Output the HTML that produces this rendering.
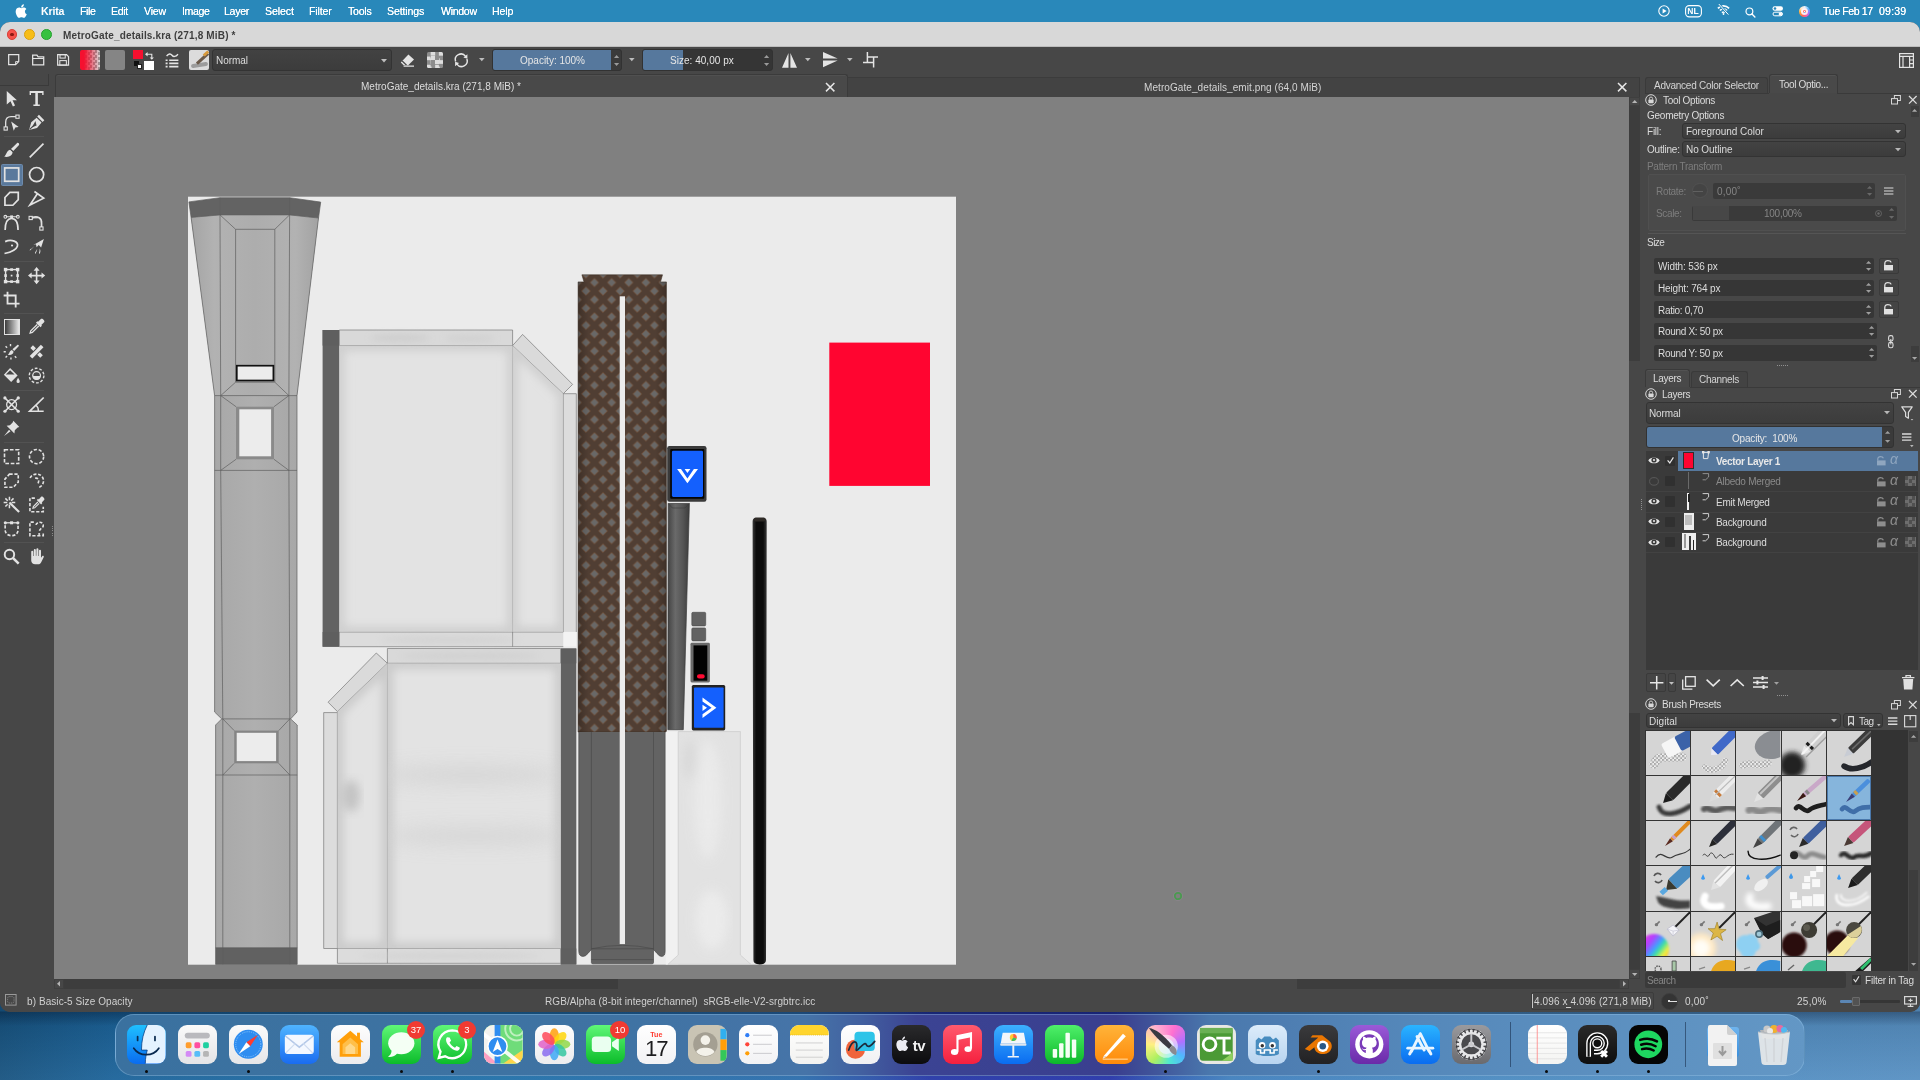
<!DOCTYPE html>
<html><head><meta charset="utf-8"><title>Krita</title>
<style>
*{box-sizing:border-box;margin:0;padding:0}
html,body{width:1920px;height:1080px;overflow:hidden;background:#1f6ea6;font-family:"Liberation Sans",sans-serif;}
.a{position:absolute}
.t{position:absolute;will-change:transform;white-space:pre;line-height:1;color:#dcdcdc;font-size:10px}
svg{position:absolute;overflow:visible}
#wall{left:0;top:0;width:1920px;height:1080px;background:
 linear-gradient(180deg,rgba(0,0,0,0) 1011px,rgba(0,10,30,.30) 1012px,rgba(0,10,30,0) 1026px),
 linear-gradient(180deg,rgba(0,0,0,.10) 1012px,rgba(255,255,255,.06) 1080px),
 linear-gradient(90deg,#16527f 0,#1a6299 115px,#1f6fa8 500px,#2a6cab 800px,#2a52a8 870px,#2436a6 930px,#2433a8 1110px,#3060b4 1170px,#3f7fbd 1230px,#4a8ac0 1500px,#568fc2 1920px);}
#menubar{left:0;top:0;width:1920px;height:22px;background:#2988ba}
#win{left:0;top:22px;width:1920px;height:990px;background:#474747;border-radius:10px;overflow:hidden}
</style></head><body>
<div id="wall" class="a"></div>
<div class="a" style="left:0;top:22px;width:1920px;height:14px;background:#2988ba"></div><div id="menubar" class="a"><svg style="left:15px;top:3.5px;" width="12" height="14.5" viewBox="0.8 3 14.6 18.6"><path fill="#fff" d="M13.1 12.6c-.02-2.2 1.8-3.27 1.88-3.32-1.03-1.5-2.62-1.7-3.18-1.73-1.35-.14-2.64.8-3.33.8-.69 0-1.75-.78-2.88-.76-1.48.02-2.85.86-3.61 2.19-1.54 2.67-.39 6.62 1.1 8.79.74 1.06 1.61 2.25 2.76 2.21 1.11-.04 1.53-.71 2.87-.71 1.33 0 1.71.71 2.88.69 1.19-.02 1.94-1.08 2.67-2.15.84-1.23 1.19-2.42 1.21-2.48-.03-.01-2.32-.89-2.37-3.53zM10.9 6.1c.61-.74 1.02-1.77.91-2.8-.88.04-1.94.59-2.57 1.32-.56.65-1.06 1.7-.93 2.71.98.08 1.98-.5 2.59-1.23z"/></svg><span class="t" style="left:40.50px;top:6px;font-size:10.6px;font-weight:bold;color:#fff;letter-spacing:-0.170px;">Krita</span><span class="t" style="left:79.50px;top:6px;font-size:10.6px;color:#fff;letter-spacing:-0.395px;text-shadow:0 0 .4px #fff;">File</span><span class="t" style="left:111.00px;top:6px;font-size:10.6px;color:#fff;letter-spacing:-0.316px;text-shadow:0 0 .4px #fff;">Edit</span><span class="t" style="left:144.00px;top:6px;font-size:10.6px;color:#fff;letter-spacing:-0.196px;text-shadow:0 0 .4px #fff;">View</span><span class="t" style="left:181.50px;top:6px;font-size:10.6px;color:#fff;letter-spacing:-0.392px;text-shadow:0 0 .4px #fff;">Image</span><span class="t" style="left:224.00px;top:6px;font-size:10.6px;color:#fff;letter-spacing:-0.303px;text-shadow:0 0 .4px #fff;">Layer</span><span class="t" style="left:264.50px;top:6px;font-size:10.6px;color:#fff;letter-spacing:-0.110px;text-shadow:0 0 .4px #fff;">Select</span><span class="t" style="left:309.00px;top:6px;font-size:10.6px;color:#fff;letter-spacing:-0.142px;text-shadow:0 0 .4px #fff;">Filter</span><span class="t" style="left:347.50px;top:6px;font-size:10.6px;color:#fff;letter-spacing:-0.249px;text-shadow:0 0 .4px #fff;">Tools</span><span class="t" style="left:387.00px;top:6px;font-size:10.6px;color:#fff;letter-spacing:-0.125px;text-shadow:0 0 .4px #fff;">Settings</span><span class="t" style="left:440.50px;top:6px;font-size:10.6px;color:#fff;letter-spacing:-0.316px;text-shadow:0 0 .4px #fff;">Window</span><span class="t" style="left:492.00px;top:6px;font-size:10.6px;color:#fff;letter-spacing:-0.125px;text-shadow:0 0 .4px #fff;">Help</span><span class="t" style="left:1822.80px;top:6px;font-size:10.6px;color:#fff;letter-spacing:-0.411px;text-shadow:0 0 .4px #fff;">Tue Feb 17</span><span class="t" style="left:1878.60px;top:6px;font-size:10.6px;color:#fff;letter-spacing:0.175px;text-shadow:0 0 .4px #fff;">09:39</span><svg style="left:1658.2px;top:5px;" width="12" height="12"><circle cx="6" cy="6" r="5.2" fill="none" stroke="#fff" stroke-width="1.1"/><path d="M4.6 3.6L8.6 6L4.6 8.4z" fill="#fff"/></svg><svg style="left:1684.5px;top:5px;" width="17" height="12.5"><rect x=".6" y=".6" width="15.8" height="11.3" rx="3.6" fill="none" stroke="#fff" stroke-width="1.1"/></svg><span class="t" style="left:1693.00px;top:7px;font-size:8.5px;font-weight:bold;color:#fff;transform:translateX(-50%);">NL</span><svg style="left:1717.4px;top:4.4px;" width="13" height="11"><g fill="none" stroke="#fff" stroke-linecap="butt"><path d="M.9 4.3C4.2 1.0 8.8 1.0 12.1 4.3" stroke-width="1.7"/><path d="M2.9 6.5C5.1 4.5 7.9 4.5 10.1 6.5" stroke-width="1.6"/><path d="M4.9 8.6C5.9 7.8 7.1 7.8 8.1 8.6" stroke-width="1.5"/></g><circle cx="6.5" cy="10" r=".9" fill="#fff"/><path d="M1.8 0L11.4 10.6" stroke="#2988ba" stroke-width="2.6"/><path d="M1.8 0L11.4 10.6" stroke="#fff" stroke-width="1"/></svg><svg style="left:1744.7px;top:6.5px;" width="11" height="11" viewBox="0 0 12 12"><circle cx="4.8" cy="4.8" r="3.7" fill="none" stroke="#fff" stroke-width="1.3"/><path d="M7.6 7.6L10.8 10.8" stroke="#fff" stroke-width="1.5" stroke-linecap="round"/></svg><svg style="left:1771.5px;top:6px;" width="11.5" height="11"><rect x=".5" y=".3" width="10.5" height="4.4" rx="2.2" fill="#fff"/><circle cx="3" cy="2.5" r="1.3" fill="#2988ba"/><rect x="1" y="6.2" width="9.5" height="3.6" rx="1.8" fill="none" stroke="#fff" stroke-width="1"/><circle cx="8.4" cy="8" r="1.7" fill="#fff"/></svg><div class="a" style="left:1799.1px;top:5.5px;width:11.4px;height:11.4px;border-radius:50%;background:conic-gradient(from 210deg,#ff6a4a,#ffb03a,#ffe6c8,#e8f2ff,#5ab8ff,#a070ff,#ff5aa8,#ff6a4a)"></div><div class="a" style="left:1801.1px;top:7.5px;width:7.4px;height:7.4px;border-radius:50%;background:radial-gradient(circle at 40% 40%,#fff 0,#ffe9f0 55%,#ffc8d8 100%)"></div><div class="a" style="left:1803px;top:9.6px;width:3.4px;height:3px;border-radius:50%;border:.8px solid #ff7a70;border-bottom-color:#6ab0ff"></div></div><div id="win" class="a"><div class="a" style="left:0px;top:0px;width:1920px;height:24.5px;background:#d8d8d8;border-bottom:1px solid #bdbdbd;"></div><div class="a" style="left:6.8px;top:7.3px;width:10.6px;height:10.6px;border-radius:50%;background:#f6524a;border:.5px solid #d8423a"></div><div class="a" style="left:24px;top:7.3px;width:10.6px;height:10.6px;border-radius:50%;background:#f7bd17;border:.5px solid #d9a213"></div><div class="a" style="left:41.3px;top:7.3px;width:10.6px;height:10.6px;border-radius:50%;background:#36c13f;border:.5px solid #2aa233"></div><div class="a" style="left:10.3px;top:10.8px;width:3.6px;height:3.6px;border-radius:50%;background:#8c1a12"></div><span class="t" style="left:63.30px;top:9px;font-size:10px;font-weight:bold;color:#3e3e3e;letter-spacing:0.170px;">MetroGate_details.kra (271,8 MiB) *</span><svg style="left:7.9px;top:32.2px;" width="11.4" height="11.4" viewBox="0 0 12 12"><path d="M.7.7H11.3V8L8 11.3H.7z" fill="none" stroke="#e4e4e4" stroke-width="1.3"/><path d="M11.3 8H8V11.3" fill="none" stroke="#e4e4e4" stroke-width="1"/></svg><svg style="left:32px;top:32.1px;" width="12.4" height="11.6" viewBox="0 0 13 12"><path d="M.7 11.3V1.2H5.2L6.4 3H12.3V11.3z" fill="none" stroke="#e4e4e4" stroke-width="1.3"/><path d="M.7 4.6H12.3" stroke="#e4e4e4" stroke-width="1.2"/></svg><svg style="left:56.9px;top:32.1px;" width="12.2" height="11.8" viewBox="0 0 13 12.5"><path d="M.7.7H10.2L12.3 2.8V11.8H.7z" fill="none" stroke="#e4e4e4" stroke-width="1.3"/><rect x="3.2" y=".7" width="5.6" height="3.6" fill="none" stroke="#e4e4e4" stroke-width="1.1"/><rect x="3" y="7" width="7" height="4.8" fill="none" stroke="#e4e4e4" stroke-width="1.1"/></svg><div class="a" style="left:80px;top:28px;width:20px;height:20px;border-radius:2px;background:linear-gradient(90deg,#f5102f 0,#f5102f 20%,rgba(245,16,47,0) 100%),repeating-conic-gradient(#d8d8d8 0 25%,#9a9a9a 0 50%) 0 0/5px 5px"></div><div class="a" style="left:105px;top:28px;width:19.5px;height:20px;border-radius:2px;background:#858585"></div><div class="a" style="left:143.6px;top:38.8px;width:10px;height:9.6px;background:#fff;"></div><div class="a" style="left:133px;top:28.4px;width:9.6px;height:9px;background:#f5102f;"></div><div class="a" style="left:133.6px;top:39.4px;width:5px;height:4.6px;background:#111;"></div><div class="a" style="left:136.6px;top:42.4px;width:5px;height:4.6px;background:#fff;border:.6px solid #222;"></div><svg style="left:144.5px;top:29px;" width="9" height="8.5"><path d="M1.5 3.2H6.8V7.6" fill="none" stroke="#e4e4e4" stroke-width="1.1"/><path d="M0 3.2L2.6 1V5.4z M6.8 8.8L4.7 6.4H8.9z" fill="#e4e4e4"/></svg><svg style="left:165px;top:30px;" width="14" height="16"><path d="M1.6 4.2C3.6 1.4 5.6 1.4 7 3.2S10.6 5 13 2.2" fill="none" stroke="#e4e4e4" stroke-width="1.4"/><g stroke="#e4e4e4" stroke-width="1.6"><path d="M4.2 8.2H13.4M4.2 11.4H13.4M4.2 14.6H13.4"/><path d="M.6 8.2H2.6M.6 11.4H2.6M.6 14.6H2.6"/></g></svg><div class="a" style="left:189px;top:28px;width:20px;height:20px;border-radius:2px;background:#dcdcdc;overflow:hidden"><div class="a" style="left:2px;top:13px;width:17px;height:4px;border-radius:2px;background:#9c9c9c;transform:rotate(-8deg)"></div><div class="a" style="left:6px;top:7px;width:15px;height:3px;background:#6b5a4a;transform:rotate(-42deg)"></div><div class="a" style="left:14px;top:2px;width:6px;height:3px;background:#d99a3a;transform:rotate(-42deg)"></div></div><div class="a" style="left:212px;top:27px;width:179.5px;height:22px;border-radius:3px;background:linear-gradient(#424242,#3c3c3c);border:1px solid #333"></div><span class="t" style="left:215.60px;top:34px;font-size:10px;letter-spacing:-0.038px;">Normal</span><svg style="left:380.5px;top:36.6px;" width="6" height="3.4"><path d="M0 0H6L3 3.4z" fill="#bdbdbd"/></svg><svg style="left:399.5px;top:31.5px;" width="15" height="13"><path d="M8.4.6L14 5.6L8.2 11.2H3.6L.8 8.4z" fill="#e4e4e4"/><path d="M2.2 7L6.6 11.2" stroke="#474747" stroke-width="1.2"/><path d="M3.6 12.2H14" stroke="#e4e4e4" stroke-width="1.2"/></svg><div class="a" style="left:426.6px;top:30px;width:16.4px;height:16.4px;border-radius:1.5px;background:repeating-conic-gradient(#dedede 0 25%,#8d8d8d 0 50%) 0 0/8.2px 8.2px"></div><div class="a" style="left:430.7px;top:34.1px;width:8.2px;height:8.2px;background:repeating-conic-gradient(#8d8d8d 0 25%,#dedede 0 50%) 0 0/8.2px 8.2px"></div><svg style="left:454px;top:31px;" width="14.5" height="14.5"><g fill="none" stroke="#e4e4e4" stroke-width="1.5"><path d="M1.6 8.6A5.7 5.7 0 0 1 11.6 3.4"/><path d="M12.9 5.9A5.7 5.7 0 0 1 2.9 11.1"/></g><path d="M9.4 4.4L13.4 1.2L13.4 5.8z M5.1 10.1L1.1 13.3L1.1 8.7z" fill="#e4e4e4"/></svg><svg style="left:479.2px;top:36.4px;" width="5.6" height="3.2"><path d="M0 0H5.6L2.8 3.2z" fill="#bdbdbd"/></svg><div class="a" style="left:492px;top:27px;width:130px;height:21.5px;border-radius:3px;background:#3a3a3a;border:1px solid #323232"></div><div class="a" style="left:493px;top:28px;width:118.4px;height:19.5px;background:#56789d;border-radius:2px 0 0 2px;"></div><span class="t" style="left:519.60px;top:34px;font-size:10px;color:#e6e6e6;letter-spacing:-0.003px;">Opacity: 100%</span><svg style="left:614.4px;top:32.6px;" width="5.2" height="3"><path d="M0 3H5.2L2.6 0z" fill="#9a9a9a"/></svg><svg style="left:614.4px;top:41px;" width="5.2" height="3"><path d="M0 0H5.2L2.6 3z" fill="#9a9a9a"/></svg><svg style="left:629.2px;top:36.4px;" width="5.6" height="3.2"><path d="M0 0H5.6L2.8 3.2z" fill="#bdbdbd"/></svg><div class="a" style="left:642px;top:27px;width:131px;height:21.5px;border-radius:3px;background:#353535;border:1px solid #323232"></div><div class="a" style="left:643px;top:28px;width:40px;height:19.5px;background:#56789d;border-radius:2px 0 0 2px;"></div><span class="t" style="left:670.00px;top:34px;font-size:10px;color:#e6e6e6;letter-spacing:0.030px;">Size: 40,00 px</span><svg style="left:764.4px;top:32.6px;" width="5.2" height="3"><path d="M0 3H5.2L2.6 0z" fill="#9a9a9a"/></svg><svg style="left:764.4px;top:41px;" width="5.2" height="3"><path d="M0 0H5.2L2.6 3z" fill="#9a9a9a"/></svg><svg style="left:781.6px;top:30.9px;" width="15" height="14.7"><path d="M0 14.7L6.5 0V14.7z M8.4 0V14.7H15z" fill="#e4e4e4"/></svg><svg style="left:805.4px;top:36.4px;" width="5.6" height="3.2"><path d="M0 0H5.6L2.8 3.2z" fill="#bdbdbd"/></svg><svg style="left:823.1px;top:30.25px;" width="14.7" height="15.35"><path d="M0 0L14.7 6.55H0z M0 8.45H14.7L0 15.35z" fill="#e4e4e4"/></svg><svg style="left:847.4px;top:36.4px;" width="5.6" height="3.2"><path d="M0 0H5.6L2.8 3.2z" fill="#bdbdbd"/></svg><svg style="left:862.5px;top:30.25px;" width="15" height="15.4"><g fill="none" stroke="#e4e4e4" stroke-width="1.5"><path d="M4.4 0V10.5M4.4 5H15M0 10.5H10.6M10.6 5V15.4"/></g></svg><svg style="left:1898.5px;top:30.6px;" width="15" height="15"><g fill="none" stroke="#e4e4e4" stroke-width="1.2"><rect x=".6" y=".6" width="13.8" height="13.8"/><path d="M.6 3.4H14.4M4 3.4V14.4M10.6 3.4V14.4M10.6 7H14.4M10.6 10.6H14.4"/></g></svg><div class="a" style="left:0px;top:52px;width:1920px;height:23px;background:#474747;"></div><div class="a" style="left:0px;top:52px;width:49px;height:11.5px;background:#474747;border-right:1px solid #3a3a3a;border-bottom:1px solid #3a3a3a;"></div><div class="a" style="left:847px;top:54.5px;width:792.6px;height:20.5px;background:#434343;border-top:1px solid #3c3c3c;border-right:1px solid #3a3a3a;"></div><div class="a" style="left:54.5px;top:52px;width:793px;height:23px;background:#494949;border:1px solid #3b3b3b;border-bottom:none;border-radius:3px 3px 0 0;box-shadow:inset 0 1px 0 #505050;"></div><span class="t" style="left:361.00px;top:60px;font-size:10px;color:#dddddd;letter-spacing:0.013px;">MetroGate_details.kra (271,8 MiB) *</span><span class="t" style="left:1144.00px;top:61px;font-size:10px;color:#d4d4d4;letter-spacing:0.080px;">MetroGate_details_emit.png (64,0 MiB)</span><svg style="left:825.5px;top:60.6px;" width="8.4" height="8.4"><path d="M0 0L8.4 8.4 M8.4 0L0 8.4" stroke="#e6e6e6" stroke-width="1.5"/></svg><svg style="left:1618.2px;top:60.8px;" width="8.4" height="8.4"><path d="M0 0L8.4 8.4 M8.4 0L0 8.4" stroke="#e6e6e6" stroke-width="1.5"/></svg><div class="a" style="left:0px;top:63.5px;width:53.9px;height:905px;background:#474747;"></div><svg style="left:3.3px;top:67.6px;" width="17.2" height="17.2" viewBox="0 0 16 16"><g fill="none" stroke="#e2e2e2" stroke-width="1.6" stroke-linejoin="miter"><path fill="#e2e2e2" stroke="none" d="M3.5 1L13 9.6H8.9L11.2 14.4L9.2 15.3L7 10.5L3.5 13.6z"/></g></svg><svg style="left:27.5px;top:67.6px;" width="17.2" height="17.2" viewBox="0 0 16 16"><g fill="none" stroke="#e2e2e2" stroke-width="1.6" stroke-linejoin="miter"><path fill="#e2e2e2" stroke="none" d="M1.5 1H14.5V4.6H13.2V2.8H9.2V13.6H11V15H5V13.6H6.8V2.8H2.8V4.6H1.5z"/></g></svg><svg style="left:3.3px;top:92px;" width="17.2" height="17.2" viewBox="0 0 16 16"><g fill="none" stroke="#e2e2e2" stroke-width="1.6" stroke-linejoin="miter"><path d="M2.5 12V7.5C2.5 4.5 4.5 2.5 7.5 2.5H12" stroke-width="1.2"/><rect x="1" y="12" width="3" height="3" stroke-width="1"/><rect x="12" y="1" width="3" height="3" stroke-width="1"/><path fill="#e2e2e2" stroke="none" d="M7.6 7L14.6 12.2L11.4 12.6L10 15.6z"/></g></svg><svg style="left:27.5px;top:92px;" width="17.2" height="17.2" viewBox="0 0 16 16"><g fill="none" stroke="#e2e2e2" stroke-width="1.6" stroke-linejoin="miter"><path fill="#e2e2e2" stroke="none" d="M10.2.8L15.2 5.8L13.6 7.4L8.6 2.4z M8 3.4L12.6 8L8.4 13L1 15L3 7.6z M6.9 6.6L8 10.6L3.6 12.6z" fill-rule="evenodd"/><path d="M1.6 14.4L6.4 9.6" stroke="#474747" stroke-width="1"/></g></svg><svg style="left:3.3px;top:119.8px;" width="17.2" height="17.2" viewBox="0 0 16 16"><g fill="none" stroke="#e2e2e2" stroke-width="1.6" stroke-linejoin="miter"><path fill="#e2e2e2" stroke="none" d="M13.4.8C14.6.6 15.4 1.6 14.9 2.7L9.6 8.4L7.4 6.4z M6.6 7.2L8.9 9.3C8.9 12.6 5.6 14.6 1 13.6C3.4 12.2 3 8.2 6.6 7.2z"/><path d="M6.9 6.8L9.3 9" stroke="#474747" stroke-width=".9"/></g></svg><svg style="left:27.5px;top:119.8px;" width="17.2" height="17.2" viewBox="0 0 16 16"><g fill="none" stroke="#e2e2e2" stroke-width="1.6" stroke-linejoin="miter"><path d="M1.6 14.4L14.4 1.6" stroke-width="1.6"/></g></svg><div class="a" style="left:1.1px;top:141.5px;width:22px;height:22.2px;border-radius:1.5px;background:#5a799c;border:1px solid #6d8bad"></div><svg style="left:3.3px;top:143.8px;" width="17.2" height="17.2" viewBox="0 0 16 16"><g fill="none" stroke="#e2e2e2" stroke-width="1.6" stroke-linejoin="miter"><rect x="1.6" y="1.8" width="13" height="12.4" stroke-width="1.6"/></g></svg><svg style="left:27.5px;top:143.8px;" width="17.2" height="17.2" viewBox="0 0 16 16"><g fill="none" stroke="#e2e2e2" stroke-width="1.6" stroke-linejoin="miter"><circle cx="8" cy="8" r="6.6" stroke-width="1.6"/></g></svg><svg style="left:3.3px;top:168.2px;" width="17.2" height="17.2" viewBox="0 0 16 16"><g fill="none" stroke="#e2e2e2" stroke-width="1.6" stroke-linejoin="miter"><path d="M6.4 2.2H14.2V9L9.2 14.2H1.8V7z" stroke-width="1.6"/></g></svg><svg style="left:27.5px;top:168.2px;" width="17.2" height="17.2" viewBox="0 0 16 16"><g fill="none" stroke="#e2e2e2" stroke-width="1.6" stroke-linejoin="miter"><path d="M6 1.4L14.6 7.6L1.8 14L8.4 4" stroke-width="1.6"/></g></svg><svg style="left:3.3px;top:192px;" width="17.2" height="17.2" viewBox="0 0 16 16"><g fill="none" stroke="#e2e2e2" stroke-width="1.6" stroke-linejoin="miter"><path d="M2 15C2 8 4 4.2 8 4.2S14 8 14 15" stroke-width="1.6"/><path d="M2.6 2.6H13.4" stroke-width="1"/><circle cx="2.2" cy="2.6" r="1.3" stroke-width="1"/><circle cx="13.8" cy="2.6" r="1.3" stroke-width="1"/><rect x="6.7" y="1.3" width="2.6" height="2.6" fill="#e2e2e2" stroke="none"/></g></svg><svg style="left:27.5px;top:192px;" width="17.2" height="17.2" viewBox="0 0 16 16"><g fill="none" stroke="#e2e2e2" stroke-width="1.6" stroke-linejoin="miter"><path d="M3.6 3.4C9 1.6 13 3.6 12.6 8.6V12" stroke-width="1.6"/><rect x="1" y="2.2" width="3" height="3" stroke-width="1"/><rect x="11" y="12" width="3" height="3" stroke-width="1"/><path d="M4 3.6H9" stroke-width=".9"/></g></svg><svg style="left:3.3px;top:215.8px;" width="17.2" height="17.2" viewBox="0 0 16 16"><g fill="none" stroke="#e2e2e2" stroke-width="1.6" stroke-linejoin="miter"><path d="M2 3.4C8 .6 14.6 3.6 13.4 7.6S6 13.4 1.4 14.4" stroke-width="1.6"/><circle cx="8.4" cy="7" r="1" fill="#e2e2e2" stroke="none"/></g></svg><svg style="left:27.5px;top:215.8px;" width="17.2" height="17.2" viewBox="0 0 16 16"><g fill="none" stroke="#e2e2e2" stroke-width="1.6" stroke-linejoin="miter"><path fill="#e2e2e2" stroke="none" d="M14.8 1L12.2 8.8L10 6.6L8 8.6L7.4 5.8L5 6.4z M5.6 7.6L3.6 9.8C2.6 9.8 1.6 10.6 1.6 11.8L4.4 9.4z M8.6 10L7.4 12.4C6.6 13 6.2 14 6.8 15L8.2 12z M11 9.6L10.6 12.6C10 13.4 10.2 14.4 11 15L11.6 12z"/></g></svg><svg style="left:3.3px;top:244.6px;" width="17.2" height="17.2" viewBox="0 0 16 16"><g fill="none" stroke="#e2e2e2" stroke-width="1.6" stroke-linejoin="miter"><rect x="2.4" y="2.4" width="11.2" height="11.2" stroke-width="1.3"/><g fill="#e2e2e2" stroke="none"><rect x=".8" y=".8" width="3.2" height="3.2"/><rect x="12" y=".8" width="3.2" height="3.2"/><rect x=".8" y="12" width="3.2" height="3.2"/><rect x="12" y="12" width="3.2" height="3.2"/><rect x="6.7" y="1.2" width="2.6" height="2.4"/><rect x="6.7" y="12.4" width="2.6" height="2.4"/><rect x="1.2" y="6.7" width="2.4" height="2.6"/><rect x="12.4" y="6.7" width="2.4" height="2.6"/><rect x="7.2" y="7.2" width="1.6" height="1.6"/></g></g></svg><svg style="left:27.5px;top:244.6px;" width="17.2" height="17.2" viewBox="0 0 16 16"><g fill="none" stroke="#e2e2e2" stroke-width="1.6" stroke-linejoin="miter"><path d="M8 2V14M2 8H14" stroke-width="1.5"/><path fill="#e2e2e2" stroke="none" d="M8 0L10.8 3.4H5.2z M8 16L10.8 12.6H5.2z M0 8L3.4 5.2V10.8z M16 8L12.6 5.2V10.8z"/></g></svg><svg style="left:3.3px;top:269px;" width="17.2" height="17.2" viewBox="0 0 16 16"><g fill="none" stroke="#e2e2e2" stroke-width="1.6" stroke-linejoin="miter"><path d="M4.2.6V11.8H15.4M.6 4.2H11.8V15.4" stroke-width="1.7"/></g></svg><div class="a" style="left:4.2px;top:297.3px;width:15.4px;height:15.4px;border:1.4px solid #e2e2e2;background:linear-gradient(90deg,#3d3d3d,#e8e8e8)"></div><svg style="left:27.5px;top:296.4px;" width="17.2" height="17.2" viewBox="0 0 16 16"><g fill="none" stroke="#e2e2e2" stroke-width="1.6" stroke-linejoin="miter"><path fill="#e2e2e2" stroke="none" d="M12.2.8C13.6.2 15.8 2.4 15.2 3.8L12.4 6.6L13 7.2L11.6 8.6L7.4 4.4L8.8 3L9.4 3.6z"/><path d="M8.6 6L2.6 12L2 14L4 13.4L10 7.4" stroke-width="1.2"/></g></svg><svg style="left:3.3px;top:320.8px;" width="17.2" height="17.2" viewBox="0 0 16 16"><g fill="none" stroke="#e2e2e2" stroke-width="1.6" stroke-linejoin="miter"><path fill="#e2e2e2" stroke="none" d="M13.6 1.6C14.6 1.4 15 2.2 14.6 3L10.4 7.4L8.8 5.8z M8.2 6.4L9.8 8C9.8 10.4 7.4 11.8 4.4 11C6 10 5.8 7.2 8.2 6.4z"/><g stroke-width="1.3"><path d="M7 1V3M2.4 3L3.8 4.4M.6 8.2H2.6M2.4 13.4L3.8 12M7.4 13.4V15.4M11 12.4L12.4 13.8"/></g></g></svg><svg style="left:27.5px;top:320.8px;" width="17.2" height="17.2" viewBox="0 0 16 16"><g fill="none" stroke="#e2e2e2" stroke-width="1.6" stroke-linejoin="miter"><path d="M2.8 13.2L13.2 2.8" stroke-width="3.4"/><path fill="#e2e2e2" stroke="none" d="M2.2 4.6L4.6 2.2L7.4 5L5 7.4z M8.6 11L11 8.6L13.8 11.4L11.4 13.8z"/></g></svg><svg style="left:3.3px;top:345.2px;" width="17.2" height="17.2" viewBox="0 0 16 16"><g fill="none" stroke="#e2e2e2" stroke-width="1.6" stroke-linejoin="miter"><path fill="#e2e2e2" stroke="none" d="M6.6 1L13.6 8L7.6 14L.8 7.2z M14 10C14.8 11.4 15.6 12.4 15.6 13.4A1.5 1.5 0 0 1 12.6 13.4C12.6 12.4 13.4 11.4 14 10z"/><path d="M2.6 7L6.6 3L10.8 7z" fill="#474747" stroke="none"/></g></svg><svg style="left:27.5px;top:345.2px;" width="17.2" height="17.2" viewBox="0 0 16 16"><g fill="none" stroke="#e2e2e2" stroke-width="1.6" stroke-linejoin="miter"><circle cx="8" cy="8" r="6.8" stroke-width="1.3" stroke-dasharray="2.6 1.7"/><circle cx="8" cy="8" r="3.6" stroke-width="1.2"/><path fill="#e2e2e2" stroke="none" d="M4.6 8.4H11.4A3.4 3.4 0 0 1 4.6 8.4z"/></g></svg><svg style="left:3.3px;top:374px;" width="17.2" height="17.2" viewBox="0 0 16 16"><g fill="none" stroke="#e2e2e2" stroke-width="1.6" stroke-linejoin="miter"><circle cx="8" cy="8" r="4.6" stroke-width="1.2"/><path d="M1.6 1.6L14.4 14.4M14.4 1.6L1.6 14.4" stroke-width="1.5"/><g fill="#e2e2e2" stroke="none"><circle cx="1.8" cy="1.8" r="1.5"/><circle cx="14.2" cy="1.8" r="1.5"/><circle cx="1.8" cy="14.2" r="1.5"/><circle cx="14.2" cy="14.2" r="1.5"/></g></g></svg><svg style="left:27.5px;top:374px;" width="17.2" height="17.2" viewBox="0 0 16 16"><g fill="none" stroke="#e2e2e2" stroke-width="1.6" stroke-linejoin="miter"><path d="M14.6 1.4L1.6 14.2H14.6" stroke-width="1.6"/><path d="M7.4 8.6C9 9.8 9.8 11.8 9.6 14" stroke-width="1.3"/></g></svg><svg style="left:3.3px;top:398px;" width="17.2" height="17.2" viewBox="0 0 16 16"><g fill="none" stroke="#e2e2e2" stroke-width="1.6" stroke-linejoin="miter"><path fill="#e2e2e2" stroke="none" d="M9.6.8L15.2 6.4L13.6 7L11 9.6L10.6 12.6L3.4 5.4L6.4 5L9 2.4z M5.6 9L7 10.4L1 15z"/></g></svg><svg style="left:3.3px;top:425.8px;" width="17.2" height="17.2" viewBox="0 0 16 16"><g fill="none" stroke="#e2e2e2" stroke-width="1.6" stroke-linejoin="miter"><rect x="1.4" y="1.6" width="13.2" height="12.8" stroke-width="1.5" stroke-dasharray="3.4 1.6"/></g></svg><svg style="left:27.5px;top:425.8px;" width="17.2" height="17.2" viewBox="0 0 16 16"><g fill="none" stroke="#e2e2e2" stroke-width="1.6" stroke-linejoin="miter"><circle cx="8" cy="8" r="6.6" stroke-width="1.5" stroke-dasharray="3 1.7"/></g></svg><svg style="left:3.3px;top:449.8px;" width="17.2" height="17.2" viewBox="0 0 16 16"><g fill="none" stroke="#e2e2e2" stroke-width="1.6" stroke-linejoin="miter"><path d="M6 2H14.2V9.4L9.6 14.2H1.8V6.6z" stroke-width="1.5" stroke-dasharray="3 1.6"/></g></svg><svg style="left:27.5px;top:449.8px;" width="17.2" height="17.2" viewBox="0 0 16 16"><g fill="none" stroke="#e2e2e2" stroke-width="1.6" stroke-linejoin="miter"><path d="M2 5.6C3.6 1 11.6.6 13.8 5.4S12 14.6 9.4 14.4M6.6 5.8C9.6 5 11 8 9 11" stroke-width="1.5" stroke-dasharray="2.8 1.6"/></g></svg><svg style="left:3.3px;top:473.6px;" width="17.2" height="17.2" viewBox="0 0 16 16"><g fill="none" stroke="#e2e2e2" stroke-width="1.6" stroke-linejoin="miter"><path d="M6 6L15 15" stroke-width="2"/><path d="M6 .6V4M6 8V11.4M.6 6H4M8 6H11.4M2.2 2.2L4.4 4.4M9.8 2.2L7.6 4.4M2.2 9.8L4.4 7.6" stroke-width="1.4"/></g></svg><svg style="left:27.5px;top:473.6px;" width="17.2" height="17.2" viewBox="0 0 16 16"><g fill="none" stroke="#e2e2e2" stroke-width="1.6" stroke-linejoin="miter"><path d="M6.4 2H1.8V14.6H14.2V10" stroke-width="1.5" stroke-dasharray="3 1.6"/><path fill="#e2e2e2" stroke="none" d="M12.2.6C13.6 0 15.8 2.2 15.2 3.6L12.8 6L13.4 6.6L12.2 7.8L8.2 3.8L9.4 2.6L10 3.2z"/><path d="M9.2 5.6L5 9.8L4.6 11.4L6.2 11L10.4 6.8" stroke-width="1.1"/></g></svg><svg style="left:3.3px;top:497.6px;" width="17.2" height="17.2" viewBox="0 0 16 16"><g fill="none" stroke="#e2e2e2" stroke-width="1.6" stroke-linejoin="miter"><path d="M2 5V9C2 12.6 4.6 14.6 8 14.6S14 12.6 14 9V5" stroke-width="1.5" stroke-dasharray="3 1.6"/><path d="M3 2.6H13" stroke-width="1.2"/><circle cx="2.2" cy="2.6" r="1.5" fill="#e2e2e2" stroke="none"/><circle cx="13.8" cy="2.6" r="1.5" fill="#e2e2e2" stroke="none"/><rect x="6.6" y="1.2" width="2.8" height="2.8" fill="#e2e2e2" stroke="none"/></g></svg><svg style="left:27.5px;top:497.6px;" width="17.2" height="17.2" viewBox="0 0 16 16"><g fill="none" stroke="#e2e2e2" stroke-width="1.6" stroke-linejoin="miter"><path d="M5.4 2H1.8V14.6H14.2V11.4" stroke-width="1.5" stroke-dasharray="3 1.6"/><path d="M7.4 4.6C8 1.6 13.4 1 14.2 4.6C14.8 7.4 11 7.6 10.6 10.4" stroke-width="1.5" stroke-dasharray="2.8 1.5"/><circle cx="10.4" cy="13" r="1" fill="#e2e2e2" stroke="none"/></g></svg><svg style="left:3.3px;top:526px;" width="17.2" height="17.2" viewBox="0 0 16 16"><g fill="none" stroke="#e2e2e2" stroke-width="1.6" stroke-linejoin="miter"><circle cx="6" cy="6" r="4.4" stroke-width="1.8"/><path d="M9.4 9.4L14.6 14.6" stroke-width="2.4"/></g></svg><svg style="left:27.5px;top:526px;" width="17.2" height="17.2" viewBox="0 0 16 16"><g fill="none" stroke="#e2e2e2" stroke-width="1.6" stroke-linejoin="miter"><path fill="#e2e2e2" stroke="none" d="M3 8.6V3.4A.95.95 0 0 1 4.9 3.4V7.4H5.4V1.8A.95.95 0 0 1 7.3 1.8V7.2H7.8V1.2A.95.95 0 0 1 9.7 1.2V7.4H10.2V2.6A.95.95 0 0 1 12.1 2.6V9L13.2 7.6C13.8 6.8 15.2 7.4 14.6 8.6L12.4 13C11.8 14.4 10.8 15.2 9.4 15.2H6.6C4.6 15.2 3 13.6 3 11.6z"/></g></svg><div class="a" style="left:4px;top:114.2px;width:40px;height:1px;background:#525252;"></div><div class="a" style="left:4px;top:238.8px;width:40px;height:1px;background:#525252;"></div><div class="a" style="left:4px;top:291.2px;width:40px;height:1px;background:#525252;"></div><div class="a" style="left:4px;top:368px;width:40px;height:1px;background:#525252;"></div><div class="a" style="left:4px;top:420.4px;width:40px;height:1px;background:#525252;"></div><div class="a" style="left:4px;top:520.4px;width:40px;height:1px;background:#525252;"></div><div class="a" style="left:51.6px;top:504px;width:1px;height:1px;background:#8a8a8a;"></div><div class="a" style="left:51.6px;top:506.2px;width:1px;height:1px;background:#8a8a8a;"></div><div class="a" style="left:51.6px;top:508.4px;width:1px;height:1px;background:#8a8a8a;"></div><div class="a" style="left:51.6px;top:510.6px;width:1px;height:1px;background:#8a8a8a;"></div><div class="a" style="left:51.6px;top:512.8px;width:1px;height:1px;background:#8a8a8a;"></div><div class="a" style="left:53.9px;top:75px;width:1575.6px;height:882px;background:#808080;"></div><svg style="left:1173.2px;top:869px;" width="10" height="10"><circle cx="5" cy="5" r="3.2" fill="none" stroke="#4b9a50" stroke-width="1.8"/><circle cx="5" cy="5" r="4.6" fill="none" stroke="#9a8a9a" stroke-width=".6" opacity=".6"/></svg><div class="a" style="left:1629.4px;top:74.6px;width:10.4px;height:882.4px;background:#3d3d3d;"></div><div class="a" style="left:1629.4px;top:339px;width:10.4px;height:352px;background:#474747;"></div><div class="a" style="left:1629.4px;top:74.6px;width:10.4px;height:9.6px;background:#474747;border:1px solid #3f3f3f;"></div><div class="a" style="left:1629.4px;top:947.4px;width:10.4px;height:9.6px;background:#474747;border:1px solid #3f3f3f;"></div><svg style="left:1631.9px;top:78px;" width="5.4" height="3"><path d="M0 3H5.4L2.7 0z" fill="#b5b5b5"/></svg><svg style="left:1631.9px;top:950.6px;" width="5.4" height="3"><path d="M0 0H5.4L2.7 3z" fill="#b5b5b5"/></svg><div class="a" style="left:53.9px;top:957px;width:1575.6px;height:10px;background:#3d3d3d;"></div><div class="a" style="left:618px;top:957px;width:678.5px;height:10px;background:#474747;"></div><div class="a" style="left:53.9px;top:957px;width:10px;height:10px;background:#474747;border:1px solid #3f3f3f;"></div><div class="a" style="left:1619.4px;top:957px;width:10px;height:10px;background:#474747;border:1px solid #3f3f3f;"></div><svg style="left:57.4px;top:959.4px;" width="3" height="5.4"><path d="M3 0V5.4L0 2.7z" fill="#b5b5b5"/></svg><svg style="left:1623px;top:959.4px;" width="3" height="5.4"><path d="M0 0V5.4L3 2.7z" fill="#b5b5b5"/></svg><div class="a" style="left:0px;top:967px;width:1920px;height:23px;background:#474747;"></div><svg style="left:5.4px;top:972.4px;" width="11.6" height="11.6"><rect x=".5" y=".5" width="10.6" height="10.6" fill="none" stroke="#9a9a9a" stroke-width="1"/><rect x="2.6" y="2.6" width="6.4" height="6.4" rx="1.6" fill="none" stroke="#8a8a8a" stroke-width=".8" stroke-dasharray="1.4 .8"/></svg><span class="t" style="left:27.40px;top:975px;font-size:10px;color:#d0d0d0;letter-spacing:0.072px;">b) Basic-5 Size Opacity</span><span class="t" style="left:545.00px;top:975px;font-size:10px;color:#d0d0d0;letter-spacing:0.080px;">RGB/Alpha (8-bit integer/channel)  sRGB-elle-V2-srgbtrc.icc</span><div class="a" style="left:1531.4px;top:970.2px;width:123px;height:17.4px;border:1px solid #3c3c3c;border-radius:2px"></div><span class="t" style="left:1533.60px;top:975px;font-size:10px;color:#d4d4d4;letter-spacing:0.108px;">4.096 x 4.096 (271,8 MiB)</span><div class="a" style="left:1565.6px;top:984.8px;width:5px;height:1px;background:#d0d0d0;"></div><div class="a" style="left:1532.4px;top:972px;width:1px;height:14px;background:#c8c8c8;"></div><div class="a" style="left:1661px;top:971px;width:16.6px;height:16.6px;border-radius:50%;background:#343434;border:1px solid #3f3f3f"></div><div class="a" style="left:1669px;top:979px;width:8px;height:1px;background:#e0e0e0;"></div><div class="a" style="left:1668.4px;top:978.4px;width:2px;height:2px;background:#e0e0e0;"></div><span class="t" style="left:1685.00px;top:975px;font-size:10px;color:#d4d4d4;letter-spacing:0.241px;">0,00˚</span><span class="t" style="left:1796.60px;top:975px;font-size:10px;color:#d4d4d4;letter-spacing:0.288px;">25,0%</span><div class="a" style="left:1839.6px;top:978.2px;width:60.4px;height:2.4px;background:#363636;border-radius:1px;"></div><div class="a" style="left:1839.6px;top:978.2px;width:12.4px;height:2.4px;background:#5b86b4;border-radius:1px;"></div><div class="a" style="left:1851.8px;top:975.2px;width:8px;height:8.4px;background:#525252;border:1px solid #6a6a6a;border-radius:1px;"></div><svg style="left:1903.6px;top:974.4px;" width="13" height="11"><rect x=".6" y=".6" width="11.8" height="7.4" fill="none" stroke="#d8d8d8" stroke-width="1.2"/><path d="M4.4 4.4H8.6M6.5 2.6V6M3.6 10.4H9.4M6.5 8V10.4" stroke="#d8d8d8" stroke-width="1.1"/></svg><svg style="left:188px;top:175px" width="768" height="768" viewBox="188 197 768 768"><defs><linearGradient id="gcol" x1="0" x2="1" y1="0" y2="0"><stop offset="0" stop-color="#9b9b9b"/><stop offset=".1" stop-color="#a6a6a6"/><stop offset=".5" stop-color="#afafaf"/><stop offset=".9" stop-color="#a6a6a6"/><stop offset="1" stop-color="#9a9a9a"/></linearGradient><linearGradient id="gtrap" x1="0" x2="1" y1="0" y2="0"><stop offset="0" stop-color="#a4a4a4"/><stop offset=".18" stop-color="#b2b2b2"/><stop offset=".5" stop-color="#adadad"/><stop offset=".82" stop-color="#b2b2b2"/><stop offset="1" stop-color="#a2a2a2"/></linearGradient><pattern id="dia" x="577.33" y="282.53" width="17.14" height="17.14" patternUnits="userSpaceOnUse"><rect width="17.14" height="17.14" fill="#503e33"/><g fill="#696867" stroke="#7a4c2e" stroke-width=".6"><path d="M8.57 4.2L12.94 8.57L8.57 12.94L4.2 8.57z"/><path d="M0 -4.37L4.37 0L0 4.37L-4.37 0z M17.14 -4.37L21.51 0L17.14 4.37L12.77 0z M0 12.77L4.37 17.14L0 21.51L-4.37 17.14z M17.14 12.77L21.51 17.14L17.14 21.51L12.77 17.14z"/></g></pattern><filter id="bl3"><feGaussianBlur stdDeviation="3"/></filter><filter id="bl6"><feGaussianBlur stdDeviation="6"/></filter><filter id="bl1"><feGaussianBlur stdDeviation="1.2"/></filter><linearGradient id="gpole" x1="0" x2="1"><stop offset="0" stop-color="#3a3a3a"/><stop offset=".25" stop-color="#0c0c0c"/><stop offset=".75" stop-color="#0c0c0c"/><stop offset="1" stop-color="#3a3a3a"/></linearGradient><linearGradient id="garm" x1="0" x2="1"><stop offset="0" stop-color="#444"/><stop offset=".35" stop-color="#6a6a6a"/><stop offset=".7" stop-color="#555"/><stop offset="1" stop-color="#3c3c3c"/></linearGradient><linearGradient id="gstrip" x1="0" x2="1"><stop offset="0" stop-color="#000" stop-opacity=".22"/><stop offset=".12" stop-color="#000" stop-opacity="0"/><stop offset=".88" stop-color="#000" stop-opacity="0"/><stop offset="1" stop-color="#000" stop-opacity=".22"/></linearGradient></defs><rect x="188" y="196.7" width="768" height="768" fill="#ebebeb"/><path d="M191.1 217.4L220 214.9H289.6L318.5 218L297 395.6V712L290.6 718.9L297.2 725V948H215.6V725L221.7 718.9L214.6 712V395.6z" fill="url(#gcol)"/><path d="M191.1 217.4L220 214.9H289.6L318.5 218L297 395.6H214.6z" fill="url(#gtrap)"/><path d="M188.9 201.9L220 197.7H289.6L320.7 202.1L318.5 218.1L289.6 214.9H220L191.1 217.4z" fill="#636363"/><path d="M215.6 947.8H297.2V964.4H215.6z" fill="#616161"/><g stroke="#5e5e5e" stroke-width=".7" fill="none"><path d="M188.9 201.9L191.1 217.4L214.6 395.6V712L221.7 718.9L215.6 725V964.4H297.2V725L290.6 718.9L297 712V395.6L318.5 218L320.7 202.1L289.6 197.7H220z"/><path d="M220 197.7V214.9L220.7 395.6V470.4L222.8 718.9V775V964.4M289.6 197.7V214.9L288.9 395.6V470.4L289.8 718.9V775V964.4"/><path d="M191.1 217.4L220 214.9H289.6L318.5 218"/><path d="M220 214.9L235.6 229.3H274.8L289.6 214.9M235.6 229.3V382.2L220.7 395.6M274.8 229.3V382.2L288.9 395.6M235.6 382.2H274.8"/><path d="M214.6 395.6H297M220.7 395.6L236 406.7M288.9 395.6L274 406.7M236 459.3L220.7 470.4M274 459.3L288.9 470.4M214.6 470.4H297"/><path d="M221.7 718.9H290.6M222.8 718.9L234.2 730.6M289.8 718.9L278.7 730.6M234.2 763.3L222.8 775M278.7 763.3L289.8 775M215.6 775H297.2M215.6 947.8H297.2"/></g><rect x="236.8" y="365.7" width="36.6" height="14.8" fill="#ececec" stroke="#111" stroke-width="1.7"/><rect x="236" y="406.7" width="38" height="52.6" fill="#8a8a8a"/><rect x="239.3" y="409.3" width="31.8" height="47" fill="#ececec"/><rect x="234.2" y="730.6" width="44.5" height="32.7" fill="#858585"/><rect x="236.7" y="732.8" width="39.4" height="28.3" fill="#ececec"/><path d="M339.3 330H512.6V345.6L522.6 334.4L572.6 384.4L563.3 393.7H576.3V646.7H339.3z" fill="#e3e3e3"/><rect x="339.3" y="330" width="173.3" height="15.6" fill="#d9d9d9"/><path d="M512.6 345.6L522.6 334.4L572.6 384.4L563.3 393.7z" fill="#dadada"/><rect x="563.3" y="393.7" width="13" height="238" fill="#dcdcdc"/><rect x="339.3" y="632" width="224" height="14.7" fill="#dcdcdc"/><rect x="563.3" y="632" width="13" height="14.7" fill="#f3f3f3"/><rect x="322.6" y="330" width="16.7" height="316.7" fill="#626262"/><rect x="322.6" y="330" width="16.7" height="15.6" fill="#5f5f5f"/><rect x="322.6" y="632" width="16.7" height="14.7" fill="#5f5f5f"/><g stroke="#787878" stroke-width=".7" fill="none"><path d="M339.3 330H512.6V646.7M339.3 345.6H512.6L563.3 393.7V632M512.6 345.6L522.6 334.4L572.6 384.4L563.3 393.7H576.3V632M339.3 632H563.3M339.3 646.7H563.3"/></g><path d="M387.4 648.5H560.7V963.3H337.4V948.5H323.7V712.6H337.4L328.1 702.2L376.3 653L387.4 663.3z" fill="#e3e3e3"/><rect x="387.4" y="648.5" width="173.3" height="14.8" fill="#d9d9d9"/><path d="M387.4 663.3L376.3 653L328.1 702.2L337.4 711.5z" fill="#dadada"/><rect x="323.7" y="712.6" width="13.7" height="235.9" fill="#dcdcdc"/><rect x="337.4" y="948.5" width="223.3" height="14.8" fill="#dcdcdc"/><rect x="560.7" y="648.5" width="15.6" height="316" fill="#626262"/><rect x="560.7" y="648.5" width="15.6" height="14.8" fill="#5f5f5f"/><rect x="560.7" y="948.5" width="15.6" height="16" fill="#5f5f5f"/><g stroke="#787878" stroke-width=".7" fill="none"><path d="M387.4 648.5H560.7M387.4 648.5V963.3M387.4 663.3H560.7M387.4 663.3L337.4 711.5V963.3H560.7M387.4 663.3L376.3 653L328.1 702.2L337.4 711.5M337.4 712.6H323.7V948.5H560.7"/></g><filter id="bl9" x="-30%" y="-30%" width="160%" height="160%"><feGaussianBlur stdDeviation="9"/></filter><filter id="bl5" x="-20%" y="-20%" width="140%" height="140%"><feGaussianBlur stdDeviation="5"/></filter><clipPath id="cpA"><rect x="387.4" y="663.3" width="173.3" height="285.2"/></clipPath><clipPath id="cpB"><path d="M387.4 663.3L337.4 711.5V948.5H387.4z"/></clipPath><clipPath id="cpC"><rect x="339.3" y="345.6" width="173.3" height="286.4"/></clipPath><clipPath id="cpD"><path d="M512.6 345.6L563.3 393.7V632H512.6z"/></clipPath><g clip-path="url(#cpA)"><rect x="387.4" y="663.3" width="173.3" height="285.2" fill="none" stroke="#c9c9c9" stroke-width="11" filter="url(#bl5)"/><g filter="url(#bl9)" opacity=".7"><ellipse cx="470" cy="775" rx="95" ry="9" fill="#d0d0d0"/><ellipse cx="475" cy="836" rx="95" ry="9" fill="#d1d1d1"/></g></g><g clip-path="url(#cpB)"><path d="M387.4 663.3L337.4 711.5V948.5H387.4z" fill="none" stroke="#c9c9c9" stroke-width="11" filter="url(#bl5)"/><ellipse cx="351" cy="796" rx="9" ry="16" fill="#bcbcbc" filter="url(#bl5)" opacity=".8"/></g><g clip-path="url(#cpC)"><rect x="339.3" y="345.6" width="173.3" height="286.4" fill="none" stroke="#cdcdcd" stroke-width="10" filter="url(#bl5)"/></g><g clip-path="url(#cpD)"><path d="M512.6 345.6L563.3 393.7V632H512.6z" fill="none" stroke="#cdcdcd" stroke-width="10" filter="url(#bl5)"/></g><g filter="url(#bl3)" opacity=".55"><ellipse cx="400" cy="338" rx="30" ry="4" fill="#c6c6c6"/><ellipse cx="470" cy="338.5" rx="25" ry="3.6" fill="#cacaca"/><ellipse cx="450" cy="640" rx="70" ry="4" fill="#cccccc"/><ellipse cx="450" cy="956" rx="90" ry="4" fill="#cdcdcd"/><ellipse cx="470" cy="656" rx="70" ry="4" fill="#cbcbcb"/></g><path d="M581.9 274.8H662.5L660.5 281.9H666.4V732H578.1V281.9H584z" fill="url(#dia)"/><path d="M581.9 274.8H662.5L660.5 281.9H666.4V732H578.1V281.9H584z" fill="none" stroke="#3a2e26" stroke-width=".8" opacity=".7"/><path d="M578.8 731.9H665.2V951Q665.2 956.4 661.6 956.4Q659.4 956.4 657 953.4L653.5 949.4V962.6Q653.5 963.8 652 963.8H593Q591.4 963.8 591.4 962.6V949.4L588 953.4Q585.6 956.4 583 956.4Q578.8 956.4 578.8 951z" fill="#636363"/><g stroke="#4a4a4a" stroke-width=".7" fill="none"><path d="M591.4 732V949.4M653.5 732V949.4M591.4 948.8Q622.4 941.8 653.5 948.8M591.4 948.8H653.5M591.4 959.6H653.5"/><path d="M578.8 731.9V951Q578.8 956.4 583 956.4Q585.6 956.4 588 953.4L591.4 949.4V962.6Q591.4 963.8 593 963.8H652Q653.5 963.8 653.5 962.6V949.4L657 953.4Q659.4 956.4 661.6 956.4Q665.2 956.4 665.2 951V731.9"/></g><rect x="578.1" y="282" width="88.3" height="450" fill="url(#gstrip)"/><rect x="619.7" y="296.3" width="5.3" height="647.8" fill="#ececec"/><path d="M668.2 503.5H689.4L683.3 729.7H667.8z" fill="url(#garm)"/><path d="M668.2 503.5H689.4L683.3 729.7H667.8z" fill="none" stroke="#3c3c3c" stroke-width=".7"/><path d="M668.2 503.5L672.4 508H685L689.4 503.5" fill="none" stroke="#3c3c3c" stroke-width=".6"/><rect x="667.2" y="446.1" width="39.3" height="55.6" rx="2.2" fill="#3a3a3a"/><rect x="670.2" y="449.1" width="34.1" height="49.6" rx="1" fill="#050505"/><rect x="671.9" y="450.7" width="31.1" height="46.2" rx="1.4" fill="#1460fd"/><path d="M677.1 469.1H681L687.4 478.6L693.9 469.1H698L687.4 483.3z" fill="#fff"/><path d="M684.6 469.1H690.4L687.4 473.1z" fill="#fff"/><rect x="691.8" y="612.3" width="13.9" height="13.6" rx="1.2" fill="#626262" stroke="#484848" stroke-width=".6"/><rect x="691.8" y="627.9" width="13.9" height="13" rx="1.2" fill="#626262" stroke="#484848" stroke-width=".6"/><rect x="690.5" y="642.8" width="19.4" height="39.6" rx="1.4" fill="#6a6a6a"/><rect x="693.5" y="645.4" width="13.8" height="35.3" fill="#020202"/><rect x="697" y="674.2" width="7.7" height="4.3" rx="2.1" fill="#ff0a32"/><rect x="691.8" y="685" width="33.4" height="45.4" rx="1.6" fill="#222"/><rect x="694" y="687.5" width="29.6" height="40.3" rx=".8" fill="#1460fd"/><path d="M702.5 697.5L716.4 707.7L702.5 718V714.2L711.6 707.7L702.5 701.4z" fill="#fff"/><path d="M702.5 704.8L707 707.7L702.5 710.9z" fill="#fff"/><rect x="665.8" y="731.6" width="12.4" height="233" fill="#f1f1f1"/><path d="M678.2 731.6H740.4V955L751 964.4H667.9L678.2 955z" fill="#e2e2e2"/><g filter="url(#bl6)" opacity=".8"><ellipse cx="708" cy="800" rx="14" ry="60" fill="#ececec"/><ellipse cx="712" cy="920" rx="16" ry="30" fill="#eeeeee"/><ellipse cx="690" cy="760" rx="6" ry="20" fill="#d4d4d4"/></g><path d="M678.2 731.6H740.4V955L751 964.4H667.9L678.2 955z" fill="none" stroke="#c6c6c6" stroke-width=".6"/><path d="M752.6 521.5Q752.6 518.1 756 518.1H763.3Q766.7 518.1 766.7 521.5L766 960Q766 964.4 759.6 964.4Q753.4 964.4 753.4 960z" fill="url(#gpole)"/><rect x="754" y="517.4" width="11.4" height="4" rx="1.6" fill="#2e2a26"/><rect x="829.3" y="342.6" width="100.7" height="143.3" fill="#ff0530"/></svg><div class="a" style="left:1645.3px;top:55.4px;width:122.4px;height:16px;background:#434343;border:1px solid #3a3a3a;border-bottom:none;border-radius:3px 3px 0 0"></div><div class="a" style="left:1768.6px;top:52px;width:69px;height:19.4px;background:#494949;border:1px solid #3a3a3a;border-bottom:none;border-radius:3px 3px 0 0;box-shadow:inset 0 1px 0 #525252"></div><div class="a" style="left:1645.3px;top:71px;width:123.4px;height:1px;background:#3a3a3a;"></div><div class="a" style="left:1837px;top:71px;width:83px;height:1px;background:#3a3a3a;"></div><span class="t" style="left:1653.60px;top:59px;font-size:10px;color:#d4d4d4;letter-spacing:-0.254px;">Advanced Color Selector</span><span class="t" style="left:1778.60px;top:58px;font-size:10px;color:#dcdcdc;letter-spacing:-0.321px;">Tool Optio...</span><svg style="left:1645.4px;top:72px;" width="12" height="12"><circle cx="6" cy="6" r="5.3" fill="none" stroke="#d8d8d8" stroke-width="1"/><rect x="3.4" y="5.6" width="5.2" height="3.6" rx=".6" fill="#d8d8d8"/><path d="M4.4 5.6V4.6A1.6 1.6 0 0 1 7.6 4.6V5.6" fill="none" stroke="#d8d8d8" stroke-width=".9"/></svg><span class="t" style="left:1662.80px;top:74px;font-size:10px;color:#dcdcdc;letter-spacing:-0.300px;">Tool Options</span><svg style="left:1891px;top:73.4px;" width="10" height="9.6"><rect x="3.4" y=".5" width="6" height="5" fill="#474747" stroke="#d8d8d8" stroke-width="1"/><rect x=".5" y="3.6" width="6" height="5.4" fill="#474747" stroke="#d8d8d8" stroke-width="1"/></svg><svg style="left:1908.5px;top:74.2px;" width="7.6" height="7.6"><path d="M0 0L7.6 7.6 M7.6 0L0 7.6" stroke="#dcdcdc" stroke-width="1.3"/></svg><span class="t" style="left:1647.20px;top:89px;font-size:10px;color:#dcdcdc;letter-spacing:-0.247px;">Geometry Options</span><span class="t" style="left:1647.20px;top:105px;font-size:10px;color:#dcdcdc;letter-spacing:-0.231px;">Fill:</span><div class="a" style="left:1682px;top:100.8px;width:224px;height:16.2px;border-radius:3px;background:linear-gradient(#434343,#3c3c3c);border:1px solid #333"></div><span class="t" style="left:1685.60px;top:105px;font-size:10px;color:#dcdcdc;letter-spacing:-0.037px;">Foreground Color</span><svg style="left:1894.6px;top:107.5px;" width="6" height="3.2"><path d="M0 0H6L3 3.2z" fill="#b8b8b8"/></svg><span class="t" style="left:1647.20px;top:123px;font-size:10px;color:#dcdcdc;letter-spacing:-0.209px;">Outline:</span><div class="a" style="left:1682px;top:119px;width:224px;height:16.2px;border-radius:3px;background:linear-gradient(#434343,#3c3c3c);border:1px solid #333"></div><span class="t" style="left:1685.60px;top:123px;font-size:10px;color:#dcdcdc;letter-spacing:-0.086px;">No Outline</span><svg style="left:1894.6px;top:125.7px;" width="6" height="3.2"><path d="M0 0H6L3 3.2z" fill="#b8b8b8"/></svg><span class="t" style="left:1647.20px;top:140px;font-size:10px;color:#7d7d7d;letter-spacing:-0.297px;">Pattern Transform</span><div class="a" style="left:1648px;top:151.6px;width:258.4px;height:57px;background:#4a4a4a;border:1px solid #505050;border-radius:2px"></div><span class="t" style="left:1656.40px;top:165px;font-size:10px;color:#7d7d7d;letter-spacing:-0.321px;">Rotate:</span><div class="a" style="left:1692.4px;top:161.2px;width:15.2px;height:15.2px;border-radius:50%;background:#444;border:1px solid #525252"></div><div class="a" style="left:1693.4px;top:168.6px;width:10px;height:0.8px;background:#606060;"></div><div class="a" style="left:1713.3px;top:160.8px;width:162px;height:16px;border-radius:2px;background:#3a3a3a"></div><span class="t" style="left:1717.00px;top:165px;font-size:10px;color:#858585;letter-spacing:0.201px;">0,00˚</span><svg style="left:1866.8px;top:163.8px;" width="5.2" height="2.8"><path d="M0 2.8H5.2L2.6 0z" fill="#686868"/></svg><svg style="left:1866.8px;top:171px;" width="5.2" height="2.8"><path d="M0 0H5.2L2.6 2.8z" fill="#686868"/></svg><svg style="left:1883.8px;top:164.8px;" width="9.4" height="8"><path d="M0 1H9.4 M0 4 H9.4 M0 7 H9.4" stroke="#dcdcdc" stroke-width="1.2"/></svg><span class="t" style="left:1656.40px;top:187px;font-size:10px;color:#7d7d7d;letter-spacing:-0.366px;">Scale:</span><div class="a" style="left:1691.7px;top:183.6px;width:205.6px;height:15.4px;border-radius:2px;background:#3a3a3a"></div><div class="a" style="left:1692.7px;top:184.4px;width:36.8px;height:13.4px;background:#474747;"></div><span class="t" style="left:1764.20px;top:187px;font-size:10px;color:#858585;letter-spacing:-0.269px;">100,00%</span><svg style="left:1874.8px;top:187.6px;" width="7" height="7"><circle cx="3.5" cy="3.5" r="3" fill="none" stroke="#6c6c6c" stroke-width=".8"/><circle cx="3.5" cy="3.5" r="1.2" fill="#6c6c6c"/></svg><svg style="left:1888.8px;top:186.4px;" width="5.2" height="2.8"><path d="M0 2.8H5.2L2.6 0z" fill="#686868"/></svg><svg style="left:1888.8px;top:193.6px;" width="5.2" height="2.8"><path d="M0 0H5.2L2.6 2.8z" fill="#686868"/></svg><div class="a" style="left:1648px;top:210.6px;width:258.4px;height:1px;background:#555;"></div><span class="t" style="left:1647.20px;top:216px;font-size:10px;color:#dcdcdc;letter-spacing:-0.514px;">Size</span><div class="a" style="left:1654.4px;top:235.8px;width:219.5px;height:16.2px;border-radius:2px;background:#363636"></div><span class="t" style="left:1658.30px;top:240px;font-size:10px;color:#dcdcdc;letter-spacing:-0.112px;">Width: 536 px</span><svg style="left:1865.7px;top:238.9px;" width="5.2" height="2.8"><path d="M0 2.8H5.2L2.6 0z" fill="#9e9e9e"/></svg><svg style="left:1865.7px;top:246.1px;" width="5.2" height="2.8"><path d="M0 0H5.2L2.6 2.8z" fill="#9e9e9e"/></svg><div class="a" style="left:1878.6px;top:235.5px;width:20px;height:16.8px;border-radius:2px;background:#444;border:1px solid #3a3a3a"></div><svg style="left:1884.2px;top:238.4px;" width="9" height="10.4"><rect x="0" y="5" width="9" height="5.4" fill="#e0e0e0"/><path d="M.8 5V3.4C.8 1.4 2.2.6 3.8.6S6.8 1.2 7.2 2.4" fill="none" stroke="#e0e0e0" stroke-width="1.3"/></svg><div class="a" style="left:1654.4px;top:257.6px;width:219.5px;height:16.2px;border-radius:2px;background:#363636"></div><span class="t" style="left:1658.30px;top:262px;font-size:10px;color:#dcdcdc;letter-spacing:-0.157px;">Height: 764 px</span><svg style="left:1865.7px;top:260.7px;" width="5.2" height="2.8"><path d="M0 2.8H5.2L2.6 0z" fill="#9e9e9e"/></svg><svg style="left:1865.7px;top:267.9px;" width="5.2" height="2.8"><path d="M0 0H5.2L2.6 2.8z" fill="#9e9e9e"/></svg><div class="a" style="left:1878.6px;top:257.3px;width:20px;height:16.8px;border-radius:2px;background:#444;border:1px solid #3a3a3a"></div><svg style="left:1884.2px;top:260.2px;" width="9" height="10.4"><rect x="0" y="5" width="9" height="5.4" fill="#e0e0e0"/><path d="M.8 5V3.4C.8 1.4 2.2.6 3.8.6S6.8 1.2 7.2 2.4" fill="none" stroke="#e0e0e0" stroke-width="1.3"/></svg><div class="a" style="left:1654.4px;top:279.4px;width:219.5px;height:16.2px;border-radius:2px;background:#363636"></div><span class="t" style="left:1658.30px;top:284px;font-size:10px;color:#dcdcdc;letter-spacing:-0.298px;">Ratio: 0,70</span><svg style="left:1865.7px;top:282.5px;" width="5.2" height="2.8"><path d="M0 2.8H5.2L2.6 0z" fill="#9e9e9e"/></svg><svg style="left:1865.7px;top:289.7px;" width="5.2" height="2.8"><path d="M0 0H5.2L2.6 2.8z" fill="#9e9e9e"/></svg><div class="a" style="left:1878.6px;top:279.1px;width:20px;height:16.8px;border-radius:2px;background:#444;border:1px solid #3a3a3a"></div><svg style="left:1884.2px;top:282px;" width="9" height="10.4"><rect x="0" y="5" width="9" height="5.4" fill="#e0e0e0"/><path d="M.8 5V3.4C.8 1.4 2.2.6 3.8.6S6.8 1.2 7.2 2.4" fill="none" stroke="#e0e0e0" stroke-width="1.3"/></svg><div class="a" style="left:1654.4px;top:301.1px;width:222.3px;height:16.2px;border-radius:2px;background:#363636"></div><span class="t" style="left:1658.30px;top:305px;font-size:10px;color:#dcdcdc;letter-spacing:-0.303px;">Round X: 50 px</span><svg style="left:1868.5px;top:304.2px;" width="5.2" height="2.8"><path d="M0 2.8H5.2L2.6 0z" fill="#9e9e9e"/></svg><svg style="left:1868.5px;top:311.4px;" width="5.2" height="2.8"><path d="M0 0H5.2L2.6 2.8z" fill="#9e9e9e"/></svg><div class="a" style="left:1654.4px;top:322.6px;width:222.3px;height:16.2px;border-radius:2px;background:#363636"></div><span class="t" style="left:1658.30px;top:327px;font-size:10px;color:#dcdcdc;letter-spacing:-0.251px;">Round Y: 50 px</span><svg style="left:1868.5px;top:325.7px;" width="5.2" height="2.8"><path d="M0 2.8H5.2L2.6 0z" fill="#9e9e9e"/></svg><svg style="left:1868.5px;top:332.9px;" width="5.2" height="2.8"><path d="M0 0H5.2L2.6 2.8z" fill="#9e9e9e"/></svg><svg style="left:1887.6px;top:313px;" width="5.6" height="13.4"><rect x=".6" y=".6" width="4.4" height="5.4" rx="1.8" fill="none" stroke="#dcdcdc" stroke-width="1.1"/><rect x=".6" y="7.4" width="4.4" height="5.4" rx="1.8" fill="none" stroke="#dcdcdc" stroke-width="1.1"/><path d="M2.8 4V9.4" stroke="#dcdcdc" stroke-width="1.1"/></svg><div class="a" style="left:1910.6px;top:84px;width:8px;height:256px;background:#3d3d3d;"></div><div class="a" style="left:1910.6px;top:94.6px;width:8px;height:229.4px;background:#474747;"></div><svg style="left:1912px;top:87.4px;" width="5.2" height="2.8"><path d="M0 2.8H5.2L2.6 0z" fill="#a8a8a8"/></svg><svg style="left:1912px;top:334.6px;" width="5.2" height="2.8"><path d="M0 0H5.2L2.6 2.8z" fill="#a8a8a8"/></svg><div class="a" style="left:1777px;top:343.2px;width:1px;height:1px;background:#909090;"></div><div class="a" style="left:1779px;top:343.2px;width:1px;height:1px;background:#909090;"></div><div class="a" style="left:1781px;top:343.2px;width:1px;height:1px;background:#909090;"></div><div class="a" style="left:1783px;top:343.2px;width:1px;height:1px;background:#909090;"></div><div class="a" style="left:1785px;top:343.2px;width:1px;height:1px;background:#909090;"></div><div class="a" style="left:1787px;top:343.2px;width:1px;height:1px;background:#909090;"></div><div class="a" style="left:1641.4px;top:477px;width:1px;height:1px;background:#909090;"></div><div class="a" style="left:1641.4px;top:479px;width:1px;height:1px;background:#909090;"></div><div class="a" style="left:1641.4px;top:481px;width:1px;height:1px;background:#909090;"></div><div class="a" style="left:1641.4px;top:483px;width:1px;height:1px;background:#909090;"></div><div class="a" style="left:1641.4px;top:485px;width:1px;height:1px;background:#909090;"></div><div class="a" style="left:1641.4px;top:487px;width:1px;height:1px;background:#909090;"></div><div class="a" style="left:1645.1px;top:347.2px;width:45px;height:18px;background:#494949;border:1px solid #3a3a3a;border-bottom:none;border-radius:3px 3px 0 0;box-shadow:inset 0 1px 0 #525252"></div><div class="a" style="left:1691.2px;top:349.2px;width:56.4px;height:16px;background:#434343;border:1px solid #3a3a3a;border-bottom:none;border-radius:3px 3px 0 0"></div><div class="a" style="left:1690px;top:364.8px;width:230px;height:1px;background:#3a3a3a;"></div><span class="t" style="left:1652.80px;top:352px;font-size:10px;color:#dcdcdc;letter-spacing:-0.303px;">Layers</span><span class="t" style="left:1699.40px;top:353px;font-size:10px;color:#d4d4d4;letter-spacing:-0.282px;">Channels</span><svg style="left:1645.4px;top:365.7px;" width="12" height="12"><circle cx="6" cy="6" r="5.3" fill="none" stroke="#d8d8d8" stroke-width="1"/><rect x="3.4" y="5.6" width="5.2" height="3.6" rx=".6" fill="#d8d8d8"/><path d="M4.4 5.6V4.6A1.6 1.6 0 0 1 7.6 4.6V5.6" fill="none" stroke="#d8d8d8" stroke-width=".9"/></svg><span class="t" style="left:1661.60px;top:368px;font-size:10px;color:#dcdcdc;letter-spacing:-0.303px;">Layers</span><svg style="left:1891px;top:367.1px;" width="10" height="9.6"><rect x="3.4" y=".5" width="6" height="5" fill="#474747" stroke="#d8d8d8" stroke-width="1"/><rect x=".5" y="3.6" width="6" height="5.4" fill="#474747" stroke="#d8d8d8" stroke-width="1"/></svg><svg style="left:1908.6px;top:367.9px;" width="7.6" height="7.6"><path d="M0 0L7.6 7.6 M7.6 0L0 7.6" stroke="#dcdcdc" stroke-width="1.3"/></svg><div class="a" style="left:1645.7px;top:379.6px;width:248.2px;height:22.3px;border-radius:3px;background:linear-gradient(#434343,#3c3c3c);border:1px solid #333"></div><span class="t" style="left:1648.90px;top:387px;font-size:10px;color:#dcdcdc;letter-spacing:-0.122px;">Normal</span><svg style="left:1883.6px;top:389.35px;" width="6" height="3.2"><path d="M0 0H6L3 3.2z" fill="#b8b8b8"/></svg><svg style="left:1901.4px;top:383.6px;" width="13" height="15"><path d="M.8.8H11.2L7.4 6.4V12.2L4.6 10.6V6.4z" fill="none" stroke="#dcdcdc" stroke-width="1.2" stroke-linejoin="round"/><path d="M9.6 13H12.4L11 14.6z" fill="#b8b8b8"/></svg><div class="a" style="left:1645.7px;top:404.4px;width:248.2px;height:21.4px;border-radius:3px;background:#3a3a3a;border:1px solid #323232"></div><div class="a" style="left:1646.6px;top:405.2px;width:235.4px;height:19.8px;background:#56789d;border-radius:2px 0 0 2px;"></div><span class="t" style="left:1731.80px;top:412px;font-size:10px;color:#e6e6e6;letter-spacing:-0.187px;">Opacity:  100%</span><svg style="left:1885.4px;top:409.2px;" width="5.2" height="2.8"><path d="M0 2.8H5.2L2.6 0z" fill="#9e9e9e"/></svg><svg style="left:1885.4px;top:418px;" width="5.2" height="2.8"><path d="M0 0H5.2L2.6 2.8z" fill="#9e9e9e"/></svg><svg style="left:1902.4px;top:411.3px;" width="9.4" height="8.2"><path d="M0 1H9.4 M0 4.1 H9.4 M0 7.2 H9.4" stroke="#dcdcdc" stroke-width="1.3"/></svg><svg style="left:1909.6px;top:422.6px;" width="3.6" height="2.2"><path d="M0 0H3.6L1.8 2.2z" fill="#b8b8b8"/></svg><div class="a" style="left:1645.7px;top:428.8px;width:272.6px;height:219.4px;background:#3a3a3a;"></div><div class="a" style="left:1678.2px;top:429.1px;width:240.1px;height:19.6px;background:#56789d;"></div><svg style="left:1647.6px;top:434.4px;" width="12" height="8.8"><path d="M.3 4.4C2.6.6 9.4.6 11.7 4.4C9.4 8.2 2.6 8.2.3 4.4z" fill="#e6e6e6"/><circle cx="6" cy="4" r="2.6" fill="#3a3a3a"/><circle cx="6" cy="4" r="1.1" fill="#e6e6e6"/></svg><div class="a" style="left:1664.6px;top:433.6px;width:10.4px;height:10.4px;background:#303030;border-radius:1px;"></div><svg style="left:1666.6px;top:435.4px;" width="7" height="7"><path d="M.6 3.4L2.8 6L6.4.4" fill="none" stroke="#e8e8e8" stroke-width="1.2"/></svg><span class="t" style="left:1716.00px;top:435px;font-size:10px;font-weight:bold;color:#e8e8e8;letter-spacing:-0.313px;">Vector Layer 1</span><svg style="left:1701.6px;top:428.8px;" width="8" height="9"><path d="M1.4 1.4H6.6L5.8 7.6H1.4z" fill="none" stroke="#e6e6e6" stroke-width="1"/><rect x="0" y="0" width="2.4" height="2.4" fill="#e6e6e6"/><rect x="5.4" y="0" width="2.4" height="2.4" fill="#e6e6e6"/></svg><svg style="left:1877.4px;top:434.2px;opacity:1" width="9" height="9.6"><rect x="0" y="4.4" width="8.6" height="5" fill="#8fa6bf"/><path d="M.8 4.4V3C.8 1.4 2 .6 3.4.6S6 1.2 6.4 2.2" fill="none" stroke="#8fa6bf" stroke-width="1.2"/></svg><span class="t" style="left:1890.20px;top:430px;font-size:14px;color:#8fa6bf;font-style:italic;">α</span><div class="a" style="left:1645.7px;top:469.3px;width:272.6px;height:0.6px;background:#424242;"></div><svg style="left:1648.6px;top:454.7px;" width="10" height="8.8"><ellipse cx="5" cy="4.4" rx="4.4" ry="3.8" fill="none" stroke="#5c5c5c" stroke-width=".9"/></svg><div class="a" style="left:1664.6px;top:453.9px;width:10.4px;height:10.4px;background:#303030;border-radius:1px;"></div><span class="t" style="left:1716.00px;top:455px;font-size:10px;color:#8a8a8a;letter-spacing:-0.249px;">Albedo Merged</span><svg style="left:1702px;top:450.5px;" width="7.4" height="7.4"><path d="M.6.6H6.6V4L3.6 6.8H.6" fill="none" stroke="#d0d0d0" stroke-width="1" opacity="0.55"/></svg><svg style="left:1877.4px;top:454.5px;opacity:1" width="9" height="9.6"><rect x="0" y="4.4" width="8.6" height="5" fill="#8e8e8e"/><path d="M.8 4.4V3C.8 1.4 2 .6 3.4.6S6 1.2 6.4 2.2" fill="none" stroke="#8e8e8e" stroke-width="1.2"/></svg><span class="t" style="left:1890.20px;top:451px;font-size:14px;color:#8e8e8e;font-style:italic;">α</span><div class="a" style="left:1905.2px;top:453.9px;width:10.4px;height:10.4px;opacity:0.8;background:repeating-conic-gradient(#7a7a7a 0 25%,#555 0 50%) 0 0/7px 7px"></div><div class="a" style="left:1645.7px;top:489.7px;width:272.6px;height:0.6px;background:#424242;"></div><svg style="left:1647.6px;top:475.1px;" width="12" height="8.8"><path d="M.3 4.4C2.6.6 9.4.6 11.7 4.4C9.4 8.2 2.6 8.2.3 4.4z" fill="#e6e6e6"/><circle cx="6" cy="4" r="2.6" fill="#3a3a3a"/><circle cx="6" cy="4" r="1.1" fill="#e6e6e6"/></svg><div class="a" style="left:1664.6px;top:474.3px;width:10.4px;height:10.4px;background:#303030;border-radius:1px;"></div><span class="t" style="left:1716.00px;top:476px;font-size:10px;color:#dcdcdc;letter-spacing:-0.281px;">Emit Merged</span><svg style="left:1702px;top:470.9px;" width="7.4" height="7.4"><path d="M.6.6H6.6V4L3.6 6.8H.6" fill="none" stroke="#d0d0d0" stroke-width="1" opacity="1"/></svg><svg style="left:1877.4px;top:474.9px;opacity:1" width="9" height="9.6"><rect x="0" y="4.4" width="8.6" height="5" fill="#8e8e8e"/><path d="M.8 4.4V3C.8 1.4 2 .6 3.4.6S6 1.2 6.4 2.2" fill="none" stroke="#8e8e8e" stroke-width="1.2"/></svg><span class="t" style="left:1890.20px;top:471px;font-size:14px;color:#8e8e8e;font-style:italic;">α</span><div class="a" style="left:1905.2px;top:474.3px;width:10.4px;height:10.4px;opacity:0.8;background:repeating-conic-gradient(#7a7a7a 0 25%,#555 0 50%) 0 0/7px 7px"></div><div class="a" style="left:1645.7px;top:510px;width:272.6px;height:0.6px;background:#424242;"></div><svg style="left:1647.6px;top:495.4px;" width="12" height="8.8"><path d="M.3 4.4C2.6.6 9.4.6 11.7 4.4C9.4 8.2 2.6 8.2.3 4.4z" fill="#e6e6e6"/><circle cx="6" cy="4" r="2.6" fill="#3a3a3a"/><circle cx="6" cy="4" r="1.1" fill="#e6e6e6"/></svg><div class="a" style="left:1664.6px;top:494.6px;width:10.4px;height:10.4px;background:#303030;border-radius:1px;"></div><span class="t" style="left:1716.00px;top:496px;font-size:10px;color:#dcdcdc;letter-spacing:-0.297px;">Background</span><svg style="left:1702px;top:491.2px;" width="7.4" height="7.4"><path d="M.6.6H6.6V4L3.6 6.8H.6" fill="none" stroke="#d0d0d0" stroke-width="1" opacity="1"/></svg><svg style="left:1877.4px;top:495.2px;opacity:1" width="9" height="9.6"><rect x="0" y="4.4" width="8.6" height="5" fill="#8e8e8e"/><path d="M.8 4.4V3C.8 1.4 2 .6 3.4.6S6 1.2 6.4 2.2" fill="none" stroke="#8e8e8e" stroke-width="1.2"/></svg><span class="t" style="left:1890.20px;top:491px;font-size:14px;color:#8e8e8e;font-style:italic;">α</span><div class="a" style="left:1905.2px;top:494.6px;width:10.4px;height:10.4px;opacity:0.8;background:repeating-conic-gradient(#7a7a7a 0 25%,#555 0 50%) 0 0/7px 7px"></div><div class="a" style="left:1645.7px;top:530.3px;width:272.6px;height:0.6px;background:#424242;"></div><svg style="left:1647.6px;top:515.7px;" width="12" height="8.8"><path d="M.3 4.4C2.6.6 9.4.6 11.7 4.4C9.4 8.2 2.6 8.2.3 4.4z" fill="#e6e6e6"/><circle cx="6" cy="4" r="2.6" fill="#3a3a3a"/><circle cx="6" cy="4" r="1.1" fill="#e6e6e6"/></svg><div class="a" style="left:1664.6px;top:514.9px;width:10.4px;height:10.4px;background:#303030;border-radius:1px;"></div><span class="t" style="left:1716.00px;top:516px;font-size:10px;color:#dcdcdc;letter-spacing:-0.297px;">Background</span><svg style="left:1702px;top:511.5px;" width="7.4" height="7.4"><path d="M.6.6H6.6V4L3.6 6.8H.6" fill="none" stroke="#d0d0d0" stroke-width="1" opacity="1"/></svg><svg style="left:1877.4px;top:515.5px;opacity:1" width="9" height="9.6"><rect x="0" y="4.4" width="8.6" height="5" fill="#8e8e8e"/><path d="M.8 4.4V3C.8 1.4 2 .6 3.4.6S6 1.2 6.4 2.2" fill="none" stroke="#8e8e8e" stroke-width="1.2"/></svg><span class="t" style="left:1890.20px;top:512px;font-size:14px;color:#8e8e8e;font-style:italic;">α</span><div class="a" style="left:1905.2px;top:514.9px;width:10.4px;height:10.4px;opacity:0.8;background:repeating-conic-gradient(#7a7a7a 0 25%,#555 0 50%) 0 0/7px 7px"></div><div class="a" style="left:1682.6px;top:429.8px;width:11.4px;height:17.6px;background:#ff0530;border:1px solid #2e2e2e;"></div><div class="a" style="left:1688px;top:450.4px;width:0.8px;height:17px;background:#6a6a6a;"></div><div class="a" style="left:1686.8px;top:471px;width:2.2px;height:16.6px;background:#f2f2f2;"></div><div class="a" style="left:1688.4px;top:472px;width:1.2px;height:8px;background:#222;"></div><div class="a" style="left:1684px;top:491px;width:9.6px;height:16.6px;background:#ededed;"></div><div class="a" style="left:1685px;top:493px;width:7px;height:10px;background:#bdbdbd;"></div><div class="a" style="left:1681.6px;top:511.4px;width:14.6px;height:16.6px;background:#efefef;"></div><div class="a" style="left:1684px;top:512.4px;width:2px;height:14px;background:#999;"></div><div class="a" style="left:1689px;top:514px;width:2.4px;height:14px;background:#3a3a3a;"></div><div class="a" style="left:1692.6px;top:518px;width:1px;height:10px;background:#222;"></div><div class="a" style="left:1646.4px;top:651.2px;width:20px;height:19px;border:1px solid #3a3a3a;border-radius:2px;background:#454545"></div><div class="a" style="left:1667.6px;top:651.2px;width:8.6px;height:19px;border:1px solid #3a3a3a;border-radius:2px;background:#454545"></div><svg style="left:1649.6px;top:654px;" width="13.4" height="13.4"><path d="M6.7 0V13.4M0 6.7H13.4" stroke="#e6e6e6" stroke-width="1.5"/></svg><svg style="left:1669.4px;top:659.8px;" width="5" height="2.8"><path d="M0 0H5L2.5 2.8z" fill="#c0c0c0"/></svg><svg style="left:1682.4px;top:654px;" width="14" height="14"><rect x="3.6" y=".7" width="9.6" height="9.6" fill="none" stroke="#e6e6e6" stroke-width="1.3"/><path d="M.7 3.6V13.2H10.4" fill="none" stroke="#e6e6e6" stroke-width="1.3"/></svg><svg style="left:1706px;top:657.4px;" width="14.4" height="7.6"><path d="M.6.6L7.2 6.8L13.8.6" fill="none" stroke="#e6e6e6" stroke-width="1.6"/></svg><svg style="left:1730px;top:656.6px;" width="14.4" height="7.6"><path d="M.6 7L7.2.8L13.8 7" fill="none" stroke="#e6e6e6" stroke-width="1.6"/></svg><svg style="left:1753.4px;top:654.4px;" width="15" height="13"><path d="M0 2H15M0 6.5H15M0 11H15" stroke="#e6e6e6" stroke-width="1.4"/><path d="M9.6 0V4M4.4 4.5V8.5M10.6 9V13" stroke="#e6e6e6" stroke-width="2"/></svg><svg style="left:1774px;top:659.8px;" width="5" height="2.8"><path d="M0 0H5L2.5 2.8z" fill="#a0a0a0"/></svg><svg style="left:1901.6px;top:653.4px;" width="12.4" height="14.6"><path d="M0 2.6H12.4M4 2.4V.6H8.4V2.4" fill="none" stroke="#e0e0e0" stroke-width="1.3"/><path d="M1.2 4H11.2L10.4 14.6H2z" fill="#e0e0e0"/></svg><div class="a" style="left:1777px;top:672.6px;width:1px;height:1px;background:#909090;"></div><div class="a" style="left:1779px;top:672.6px;width:1px;height:1px;background:#909090;"></div><div class="a" style="left:1781px;top:672.6px;width:1px;height:1px;background:#909090;"></div><div class="a" style="left:1783px;top:672.6px;width:1px;height:1px;background:#909090;"></div><div class="a" style="left:1785px;top:672.6px;width:1px;height:1px;background:#909090;"></div><div class="a" style="left:1787px;top:672.6px;width:1px;height:1px;background:#909090;"></div><svg style="left:1645.4px;top:676.4px;" width="12" height="12"><circle cx="6" cy="6" r="5.3" fill="none" stroke="#d8d8d8" stroke-width="1"/><rect x="3.4" y="5.6" width="5.2" height="3.6" rx=".6" fill="#d8d8d8"/><path d="M4.4 5.6V4.6A1.6 1.6 0 0 1 7.6 4.6V5.6" fill="none" stroke="#d8d8d8" stroke-width=".9"/></svg><span class="t" style="left:1662.20px;top:678px;font-size:10px;color:#dcdcdc;letter-spacing:-0.293px;">Brush Presets</span><svg style="left:1891px;top:677.8px;" width="10" height="9.6"><rect x="3.4" y=".5" width="6" height="5" fill="#474747" stroke="#d8d8d8" stroke-width="1"/><rect x=".5" y="3.6" width="6" height="5.4" fill="#474747" stroke="#d8d8d8" stroke-width="1"/></svg><svg style="left:1908.8px;top:678.6px;" width="7.6" height="7.6"><path d="M0 0L7.6 7.6 M7.6 0L0 7.6" stroke="#dcdcdc" stroke-width="1.3"/></svg><div class="a" style="left:1645.9px;top:690.9px;width:195px;height:15.4px;border-radius:3px;background:linear-gradient(#434343,#3c3c3c);border:1px solid #333"></div><span class="t" style="left:1648.50px;top:695px;font-size:10px;color:#dcdcdc;letter-spacing:0.044px;">Digital</span><svg style="left:1831px;top:697.2px;" width="6" height="3.2"><path d="M0 0H6L3 3.2z" fill="#b8b8b8"/></svg><div class="a" style="left:1843.3px;top:690.9px;width:39.6px;height:15.4px;border-radius:3px;background:linear-gradient(#434343,#3c3c3c);border:1px solid #333"></div><svg style="left:1848.2px;top:693.6px;" width="6" height="9.6"><path d="M.6.6H5.4V8.8L3 6.6L.6 8.8z" fill="none" stroke="#dcdcdc" stroke-width="1.1"/></svg><span class="t" style="left:1859.20px;top:695px;font-size:10px;color:#dcdcdc;letter-spacing:-0.509px;">Tag</span><svg style="left:1877.4px;top:702.4px;" width="3.6" height="2.2"><path d="M0 0H3.6L1.8 2.2z" fill="#b8b8b8"/></svg><svg style="left:1887.6px;top:694.5px;" width="9.4" height="8.2"><path d="M0 1H9.4 M0 4.1 H9.4 M0 7.2 H9.4" stroke="#dcdcdc" stroke-width="1.4"/></svg><svg style="left:1903.6px;top:692.6px;" width="12.4" height="12.4"><rect x=".6" y=".6" width="11.2" height="11.2" fill="none" stroke="#dcdcdc" stroke-width="1.1"/><path d="M6.2.6V5" stroke="#dcdcdc" stroke-width="1.1"/></svg><div class="a" style="left:1645px;top:708px;width:263.4px;height:241px;background:#333333;"></div><div class="a" style="left:1909px;top:709px;width:8.6px;height:240px;background:#3d3d3d;"></div><div class="a" style="left:1909px;top:720px;width:8.6px;height:128.4px;background:#474747;"></div><svg style="left:1910.8px;top:712.6px;" width="5.2" height="2.8"><path d="M0 2.8H5.2L2.6 0z" fill="#a8a8a8"/></svg><svg style="left:1910.8px;top:941px;" width="5.2" height="2.8"><path d="M0 0H5.2L2.6 2.8z" fill="#a8a8a8"/></svg><svg width="0" height="0" style="left:0;top:0"><defs><pattern id="ck" width="4" height="4" patternUnits="userSpaceOnUse"><rect width="4" height="4" fill="#efefef"/><rect width="2" height="2" fill="#a8a8a8"/><rect x="2" y="2" width="2" height="2" fill="#a8a8a8"/></pattern><filter id="bb1" x="-40%" y="-40%" width="180%" height="180%"><feGaussianBlur stdDeviation="1.1"/></filter><filter id="bb2" x="-50%" y="-50%" width="200%" height="200%"><feGaussianBlur stdDeviation="2.4"/></filter></defs></svg><div class="a" style="left:1645.80px;top:708.90px;width:44.2px;height:44.20px;background:#d5d5d5;overflow:hidden;"><svg style="left:0;top:0;overflow:hidden" width="44.2" height="44.2" viewBox="0 0 44 44"><path d="M8 33C12 22 24 28 36 26" fill="none" stroke="url(#ck)" stroke-width="9" stroke-linecap="round"/><g transform="translate(30 14) rotate(-28)"><rect x="-13" y="-8" width="17" height="16" rx="2" fill="#f6f6f6"/><rect x="2" y="-8" width="20" height="16" rx="2" fill="#3b62a8"/></g></svg></div><div class="a" style="left:1691.10px;top:708.90px;width:44.2px;height:44.20px;background:#d5d5d5;overflow:hidden;"><svg style="left:0;top:0;overflow:hidden" width="44.2" height="44.2" viewBox="0 0 44 44"><path d="M14 36C18 40 30 40 34 30" fill="none" stroke="url(#ck)" stroke-width="6" stroke-linecap="round"/><g transform="translate(46 -2) rotate(135)"><rect x="0" y="-4.5" width="31.7696" height="9" rx="1.5" fill="#3f68c8"/><path d="M31.7696 -4.5 L36.7696 0 L31.7696 4.5 z" fill="#e9e9f4"/></g></svg></div><div class="a" style="left:1736.40px;top:708.90px;width:44.2px;height:44.20px;background:#d5d5d5;overflow:hidden;"><svg style="left:0;top:0;overflow:hidden" width="44.2" height="44.2" viewBox="0 0 44 44"><path d="M7 34C14 30 22 36 32 32" fill="none" stroke="url(#ck)" stroke-width="7" stroke-linecap="round"/><path d="M44 0V26C34 30 22 28 19 18C17 10 26 2 34 0z" fill="#8a8d92"/></svg></div><div class="a" style="left:1781.70px;top:708.90px;width:44.2px;height:44.20px;background:#d5d5d5;overflow:hidden;"><svg style="left:0;top:0;overflow:hidden" width="44.2" height="44.2" viewBox="0 0 44 44"><circle cx="10" cy="34" r="13" fill="#222" filter="url(#bb2)"/><g transform="translate(46 -4) rotate(133.958)"><rect x="0" y="-4.5" width="29.8973" height="9" rx="1.5" fill="#cfcfcf"/><path d="M29.8973 -4.5 L38.8973 0 L29.8973 4.5 z" fill="#e8e8e8"/><rect x="24.8973" y="-4.5" width="3" height="9" fill="#1a1a1a"/></g><path d="M44 -2L20 23" stroke="#fafafa" stroke-width="2" opacity=".8"/><path d="M48 2L24 26" stroke="#888" stroke-width="1.4" opacity=".7"/></svg></div><div class="a" style="left:1827.00px;top:708.90px;width:44.2px;height:44.20px;background:#d5d5d5;overflow:hidden;"><svg style="left:0;top:0;overflow:hidden" width="44.2" height="44.2" viewBox="0 0 44 44"><path d="M17 35C24 40 36 37 44 31" fill="none" stroke="#25272c" stroke-width="5.6" stroke-linecap="round" opacity="1"/><g transform="translate(46 -2) rotate(136.005)"><rect x="0" y="-4" width="31.3113" height="8" rx="1.5" fill="#3c3c3c"/><path d="M31.3113 -4 L40.3113 0 L31.3113 4 z" fill="#c8ccd4"/></g><path d="M45 -1L25 18" stroke="#6a6a6a" stroke-width="1.6"/></svg></div><div class="a" style="left:1645.80px;top:754.05px;width:44.2px;height:44.20px;background:#d5d5d5;overflow:hidden;"><svg style="left:0;top:0;overflow:hidden" width="44.2" height="44.2" viewBox="0 0 44 44"><path d="M13 31C16 41 30 39 44 30" fill="none" stroke="#3a3a3a" stroke-width="5" stroke-linecap="round" filter="url(#bb1)"/><g transform="translate(46 -2) rotate(135)"><rect x="0" y="-5" width="32.0122" height="10" rx="1.5" fill="#2a2a2a"/><path d="M32.0122 -5 L41.0122 0 L32.0122 5 z" fill="#1c1c1c"/></g></svg></div><div class="a" style="left:1691.10px;top:754.05px;width:44.2px;height:44.20px;background:#d5d5d5;overflow:hidden;"><svg style="left:0;top:0;overflow:hidden" width="44.2" height="44.2" viewBox="0 0 44 44"><path d="M13 33C17 29 21 37 27 34S36 31 44 32" fill="none" stroke="#5a5a5a" stroke-width="6" stroke-linecap="round" opacity="1" filter="url(#bb1)"/><g transform="translate(46 -2) rotate(135)"><rect x="0" y="-4" width="30.598" height="8" rx="1.5" fill="#ececec"/><path d="M30.598 -4 L39.598 0 L30.598 4 z" fill="#dadada"/><rect x="25.598" y="-4" width="3" height="8" fill="#c77b3a"/></g><path d="M45 -1L24 19" stroke="#bbb" stroke-width="1.2"/></svg></div><div class="a" style="left:1736.40px;top:754.05px;width:44.2px;height:44.20px;background:#d5d5d5;overflow:hidden;"><svg style="left:0;top:0;overflow:hidden" width="44.2" height="44.2" viewBox="0 0 44 44"><path d="M13 34C17 30 21 38 27 35S36 32 44 34" fill="none" stroke="#8a8a8a" stroke-width="7" stroke-linecap="round" opacity="1" filter="url(#bb1)"/><g transform="translate(46 -2) rotate(135)"><rect x="0" y="-4" width="30.598" height="8" rx="1.5" fill="#8e8e8e"/><path d="M30.598 -4 L39.598 0 L30.598 4 z" fill="#e2e2e2"/></g><path d="M44 -2L24 18" stroke="#c4c4c4" stroke-width="2"/></svg></div><div class="a" style="left:1781.70px;top:754.05px;width:44.2px;height:44.20px;background:#d5d5d5;overflow:hidden;"><svg style="left:0;top:0;overflow:hidden" width="44.2" height="44.2" viewBox="0 0 44 44"><path d="M14 32C18 26 22 38 27 34S36 30 44 28" fill="none" stroke="#1e1e1e" stroke-width="4.6" stroke-linecap="round" opacity="1"/><g transform="translate(46 -2) rotate(138.945)"><rect x="0" y="-2.3" width="31.1096" height="4.6" rx="1.5" fill="#c9a8c8"/><path d="M31.1096 -2.3 L41.1096 0 L31.1096 2.3 z" fill="#3a1814"/><rect x="26.1096" y="-2.3" width="3" height="4.6" fill="#888"/></g></svg></div><div class="a" style="left:1827.00px;top:754.05px;width:44.2px;height:44.20px;background:#86b5dc;overflow:hidden;border:1.6px solid #4a78ab;"><svg style="left:0;top:0;overflow:hidden" width="44.2" height="44.2" viewBox="0 0 44 44"><path d="M14 32C18 26 22 38 27 34S36 30 44 30" fill="none" stroke="#3f6ea8" stroke-width="4.6" stroke-linecap="round" opacity="1"/><g transform="translate(41 3) rotate(136.273)"><rect x="0" y="-2.3" width="21.8277" height="4.6" rx="1.5" fill="#4b8fdc"/><path d="M21.8277 -2.3 L31.8277 0 L21.8277 2.3 z" fill="#3a3f78"/><rect x="16.8277" y="-2.3" width="3" height="4.6" fill="#c8a050"/></g></svg></div><div class="a" style="left:1645.80px;top:799.20px;width:44.2px;height:44.20px;background:#d5d5d5;overflow:hidden;"><svg style="left:0;top:0;overflow:hidden" width="44.2" height="44.2" viewBox="0 0 44 44"><path d="M10 36C16 28 20 40 26 36S38 34 44 28" fill="none" stroke="#3a3a3a" stroke-width="1.2" stroke-linecap="round" opacity="1"/><g transform="translate(46 -2) rotate(135)"><rect x="0" y="-2" width="29.1838" height="4" rx="1.5" fill="#e08a1e"/><path d="M29.1838 -2 L38.1838 0 L29.1838 2 z" fill="#5a2a20"/><rect x="24.1838" y="-2" width="3" height="4" fill="#caa0c8"/></g></svg></div><div class="a" style="left:1691.10px;top:799.20px;width:44.2px;height:44.20px;background:#d5d5d5;overflow:hidden;"><svg style="left:0;top:0;overflow:hidden" width="44.2" height="44.2" viewBox="0 0 44 44"><path d="M12 34C14 30 16 38 18 34S22 32 24 36S28 30 31 35S36 32 42 33" fill="none" stroke="#333" stroke-width="0.9" stroke-linecap="round" opacity="1"/><g transform="translate(46 -2) rotate(135)"><rect x="0" y="-3.5" width="31.598" height="7" rx="1.5" fill="#2c2f3a"/><path d="M31.598 -3.5 L39.598 0 L31.598 3.5 z" fill="#222"/></g></svg></div><div class="a" style="left:1736.40px;top:799.20px;width:44.2px;height:44.20px;background:#d5d5d5;overflow:hidden;"><svg style="left:0;top:0;overflow:hidden" width="44.2" height="44.2" viewBox="0 0 44 44"><path d="M12 30C12 40 30 40 44 34" fill="none" stroke="#111" stroke-width="1.4" stroke-linecap="round" opacity="1"/><g transform="translate(46 -2) rotate(135)"><rect x="0" y="-3.5" width="31.0122" height="7" rx="1.5" fill="#6f7478"/><path d="M31.0122 -3.5 L41.0122 0 L31.0122 3.5 z" fill="#444"/><rect x="26.0122" y="-3.5" width="3" height="7" fill="#3b8fd0"/></g></svg></div><div class="a" style="left:1781.70px;top:799.20px;width:44.2px;height:44.20px;background:#d5d5d5;overflow:hidden;"><svg style="left:0;top:0;overflow:hidden" width="44.2" height="44.2" viewBox="0 0 44 44"><path d="M12 32C16 28 20 40 25 35S32 34 42 36" fill="none" stroke="#8c8c8c" stroke-width="5" stroke-linecap="round" opacity="1" filter="url(#bb1)"/><circle cx="12" cy="34" r="4" fill="#222"/><g transform="translate(46 -2) rotate(136.005)"><rect x="0" y="-4" width="31.3113" height="8" rx="1.5" fill="#3f5f9e"/><path d="M31.3113 -4 L40.3113 0 L31.3113 4 z" fill="#2a2a2a"/></g><path d="M8 9A4 4 0 0 1 15 8M16 13A4 4 0 0 1 9 14" fill="none" stroke="#666" stroke-width="1.6"/></svg></div><div class="a" style="left:1827.00px;top:799.20px;width:44.2px;height:44.20px;background:#d5d5d5;overflow:hidden;"><svg style="left:0;top:0;overflow:hidden" width="44.2" height="44.2" viewBox="0 0 44 44"><path d="M14 34C18 28 22 40 27 36S36 38 44 32" fill="none" stroke="#2a2a2a" stroke-width="4.4" stroke-linecap="round" opacity="1" filter="url(#bb1)"/><g transform="translate(46 -2) rotate(137.045)"><rect x="0" y="-4" width="30.6232" height="8" rx="1.5" fill="#c5557a"/><path d="M30.6232 -4 L39.6232 0 L30.6232 4 z" fill="#4a3a34"/></g></svg></div><div class="a" style="left:1645.80px;top:844.35px;width:44.2px;height:44.20px;background:#d5d5d5;overflow:hidden;"><svg style="left:0;top:0;overflow:hidden" width="44.2" height="44.2" viewBox="0 0 44 44"><path d="M10 30C18 30 30 36 44 34V42C30 44 16 42 12 36z" fill="#2a2a2a" filter="url(#bb1)" opacity=".85"/><g transform="translate(46 0) rotate(137.291)"><rect x="0" y="-6.5" width="26.3836" height="13" rx="1.5" fill="#4a8cc0"/><path d="M26.3836 -6.5 L35.3836 0 L26.3836 6.5 z" fill="#3a3a30"/></g><rect x="14" y="23" width="7" height="5" fill="#5aa8e0" transform="rotate(-42 17 25)"/><path d="M8 10A4 4 0 0 1 15 9M16 14A4 4 0 0 1 9 15" fill="none" stroke="#555" stroke-width="1.7"/></svg></div><div class="a" style="left:1691.10px;top:844.35px;width:44.2px;height:44.20px;background:#d5d5d5;overflow:hidden;"><svg style="left:0;top:0;overflow:hidden" width="44.2" height="44.2" viewBox="0 0 44 44"><path d="M14 30C10 38 16 42 30 40" fill="none" stroke="#fff" stroke-width="7" stroke-linecap="round" filter="url(#bb1)"/><g transform="translate(46 -4) rotate(132.879)"><rect x="0" y="-4.5" width="30.2099" height="9" rx="1.5" fill="#f2f2f2"/><path d="M30.2099 -4.5 L38.2099 0 L30.2099 4.5 z" fill="#e2e2e2"/></g><path d="M44 -3L24 17" stroke="#bdbdbd" stroke-width="1.4"/><path d="M12 8L14 12.4A2.2 2.2 0 0 1 10 12.4z" fill="#3d9af0"/></svg></div><div class="a" style="left:1736.40px;top:844.35px;width:44.2px;height:44.20px;background:#d5d5d5;overflow:hidden;"><svg style="left:0;top:0;overflow:hidden" width="44.2" height="44.2" viewBox="0 0 44 44"><path d="M14 30C10 38 18 42 32 40" fill="none" stroke="#fff" stroke-width="7" stroke-linecap="round" filter="url(#bb2)"/><g transform="translate(46 -2) rotate(138.814)"><rect x="0" y="-2" width="21.2603" height="4" rx="1.5" fill="#5b9ad6"/><path d="M21.2603 -2 L21.2603 0 L21.2603 2 z" fill="#f2f2f2"/></g><ellipse cx="25" cy="19" rx="8" ry="4.6" fill="#f0f0f0" transform="rotate(-40 25 19)"/><path d="M12 8L14 12.4A2.2 2.2 0 0 1 10 12.4z" fill="#3d9af0"/></svg></div><div class="a" style="left:1781.70px;top:844.35px;width:44.2px;height:44.20px;background:#d5d5d5;overflow:hidden;"><svg style="left:0;top:0;overflow:hidden" width="44.2" height="44.2" viewBox="0 0 44 44"><g fill="#f8f8f8"><rect x="8" y="26" width="7" height="7"/><rect x="10" y="34" width="9" height="8"/><rect x="20" y="30" width="10" height="10"/><rect x="31" y="28" width="11" height="12"/><rect x="22" y="10" width="6" height="6"/><rect x="28" y="5" width="6" height="6"/><rect x="34" y="0" width="7" height="6"/><rect x="20" y="17" width="8" height="6"/><rect x="30" y="13" width="8" height="8"/></g><path d="M9 7L11 11A2 2 0 0 1 7 11z" fill="#3d97e8"/></svg></div><div class="a" style="left:1827.00px;top:844.35px;width:44.2px;height:44.20px;background:#d5d5d5;overflow:hidden;"><svg style="left:0;top:0;overflow:hidden" width="44.2" height="44.2" viewBox="0 0 44 44"><path d="M10 28C6 40 24 44 42 30" fill="none" stroke="#fff" stroke-width="2.4" filter="url(#bb1)"/><path d="M14 28C12 36 28 38 40 26" fill="none" stroke="#f6f6f6" stroke-width="2" filter="url(#bb1)"/><g transform="translate(46 -2) rotate(136.169)"><rect x="0" y="-4.5" width="25.6554" height="9" rx="1.5" fill="#2e2e2e"/><path d="M25.6554 -4.5 L34.6554 0 L25.6554 4.5 z" fill="#1a1a1a"/></g><path d="M12 8L14 12.4A2.2 2.2 0 0 1 10 12.4z" fill="#3d9af0"/></svg></div><div class="a" style="left:1645.80px;top:889.50px;width:44.2px;height:44.20px;background:#d5d5d5;overflow:hidden;"><svg style="left:0;top:0;overflow:hidden" width="44.2" height="44.2" viewBox="0 0 44 44"><defs><linearGradient id="rb" x1="0" x2="1" y1=".1" y2=".9"><stop offset="0" stop-color="#ff40e0"/><stop offset=".3" stop-color="#b040ff"/><stop offset=".5" stop-color="#40a0ff"/><stop offset=".62" stop-color="#40e0a0"/><stop offset=".78" stop-color="#f0f040"/><stop offset="1" stop-color="#ff9030"/></linearGradient></defs><circle cx="8" cy="37" r="15" fill="url(#rb)" filter="url(#bb1)"/><path d="M44 0L28 16" stroke="#222" stroke-width="2"/><path d="M10 13L13.6 9.4" stroke="#777" stroke-width="1.6"/><circle cx="10.4" cy="12.6" r="1.7" fill="#777"/><path d="M21 17L27 13L33 18L27 24z" fill="#f4f4f8" stroke="#b8b8c8" stroke-width=".7"/><path d="M21 17L27 19L27 24M27 19L33 18" fill="none" stroke="#c0c0d0" stroke-width=".6"/></svg></div><div class="a" style="left:1691.10px;top:889.50px;width:44.2px;height:44.20px;background:#d5d5d5;overflow:hidden;"><svg style="left:0;top:0;overflow:hidden" width="44.2" height="44.2" viewBox="0 0 44 44"><circle cx="10" cy="36" r="15" fill="#ffe9c4" filter="url(#bb2)"/><circle cx="10" cy="36" r="9" fill="#fffdf6" filter="url(#bb2)"/><path d="M44 0L28 16" stroke="#222" stroke-width="2"/><path d="M10 13L13.6 9.4" stroke="#777" stroke-width="1.6"/><circle cx="10.4" cy="12.6" r="1.7" fill="#777"/><path d="M26 10L28 17L35 17.6L29.4 21.6L31.4 28.4L26 24.2L19.8 27.8L22.2 21L17 16.6L23.8 16.6z" fill="#dcb646" stroke="#9a7c20" stroke-width=".6"/></svg></div><div class="a" style="left:1736.40px;top:889.50px;width:44.2px;height:44.20px;background:#d5d5d5;overflow:hidden;"><svg style="left:0;top:0;overflow:hidden" width="44.2" height="44.2" viewBox="0 0 44 44"><g fill="#8ed0f2" filter="url(#bb1)"><circle cx="9" cy="32" r="9"/><circle cx="15" cy="29" r="7"/><circle cx="12" cy="38" r="8"/><circle cx="19" cy="34" r="5"/></g><path d="M18 6L36 0H44V20L32 27L26 22z" fill="#333"/><path d="M18 6L26 22L32 27L44 20V8L30 14z" fill="#1e1e1e"/><circle cx="23" cy="22" r="4" fill="#4a6a78"/><circle cx="23" cy="22" r="2.4" fill="#9ec8d8"/><path d="M10 13L13.6 9.4" stroke="#777" stroke-width="1.6"/><circle cx="10.4" cy="12.6" r="1.7" fill="#777"/></svg></div><div class="a" style="left:1781.70px;top:889.50px;width:44.2px;height:44.20px;background:#d5d5d5;overflow:hidden;"><svg style="left:0;top:0;overflow:hidden" width="44.2" height="44.2" viewBox="0 0 44 44"><circle cx="12" cy="33" r="12.5" fill="#2a0a0a" filter="url(#bb1)"/><path d="M44 0L28 16" stroke="#222" stroke-width="2"/><path d="M10 13L13.6 9.4" stroke="#777" stroke-width="1.6"/><circle cx="10.4" cy="12.6" r="1.7" fill="#777"/><circle cx="27" cy="18" r="8" fill="#3e3c34"/><circle cx="24.5" cy="15.5" r="3.4" fill="#77756a" opacity=".55"/></svg></div><div class="a" style="left:1827.00px;top:889.50px;width:44.2px;height:44.20px;background:#d5d5d5;overflow:hidden;"><svg style="left:0;top:0;overflow:hidden" width="44.2" height="44.2" viewBox="0 0 44 44"><circle cx="10" cy="31" r="12.5" fill="#2a0a0a" filter="url(#bb1)"/><path d="M0 44L24 20L31 26L16 44z" fill="#f6e9a0"/><path d="M44 0L28 16" stroke="#222" stroke-width="2"/><path d="M10 13L13.6 9.4" stroke="#777" stroke-width="1.6"/><circle cx="10.4" cy="12.6" r="1.7" fill="#777"/><circle cx="27" cy="18" r="8" fill="#4a4840"/><path d="M20.4 22.6A8 8 0 0 0 33.8 14z" fill="#ecdfa4" opacity=".9"/></svg></div><div class="a" style="left:1645.80px;top:934.65px;width:44.2px;height:13.95px;background:#d5d5d5;overflow:hidden;"><svg style="left:0;top:0;overflow:hidden" width="44.2" height="44.2" viewBox="0 0 44 44"><circle cx="12" cy="12" r="3" fill="none" stroke="#555" stroke-width="1.4" stroke-dasharray="1.4 1"/><path d="M26 4H30V14H26z" fill="#a8c8a8" stroke="#444" stroke-width=".8"/></svg></div><div class="a" style="left:1691.10px;top:934.65px;width:44.2px;height:13.95px;background:#d5d5d5;overflow:hidden;"><svg style="left:0;top:0;overflow:hidden" width="44.2" height="44.2" viewBox="0 0 44 44"><path d="M20 14C24 2 36 2 44 4V14z" fill="#e8a820"/><path d="M8 12L14 10" stroke="#888" stroke-width="1.4"/></svg></div><div class="a" style="left:1736.40px;top:934.65px;width:44.2px;height:13.95px;background:#d5d5d5;overflow:hidden;"><svg style="left:0;top:0;overflow:hidden" width="44.2" height="44.2" viewBox="0 0 44 44"><path d="M20 14C24 2 36 2 44 4V14z" fill="#3a90d8"/><path d="M8 12L14 10" stroke="#888" stroke-width="1.4"/></svg></div><div class="a" style="left:1781.70px;top:934.65px;width:44.2px;height:13.95px;background:#d5d5d5;overflow:hidden;"><svg style="left:0;top:0;overflow:hidden" width="44.2" height="44.2" viewBox="0 0 44 44"><path d="M20 14C24 2 36 2 44 4V14z" fill="#3fb890"/><path d="M6 13L12 8" stroke="#666" stroke-width="1.4"/></svg></div><div class="a" style="left:1827.00px;top:934.65px;width:44.2px;height:13.95px;background:#d5d5d5;overflow:hidden;"><svg style="left:0;top:0;overflow:hidden" width="44.2" height="44.2" viewBox="0 0 44 44"><path d="M28 14L44 0V6L36 14z" fill="#1a1a1a"/><path d="M34 12L44 2" stroke="#30c070" stroke-width="3"/></svg></div><div class="a" style="left:1645px;top:950.4px;width:201.4px;height:15.4px;border-radius:2px;background:#3a3a3a"></div><span class="t" style="left:1647.40px;top:954px;font-size:10px;color:#858585;letter-spacing:-0.515px;">Search</span><div class="a" style="left:1851.6px;top:953px;width:9.6px;height:9.6px;background:#353535;border-radius:1px;"></div><svg style="left:1853.2px;top:954.4px;" width="6.6" height="6.6"><path d="M.6 3.2L2.6 5.8L6 .4" fill="none" stroke="#e0e0e0" stroke-width="1.1"/></svg><span class="t" style="left:1865.40px;top:954px;font-size:10px;color:#dcdcdc;letter-spacing:-0.209px;">Filter in Tag</span></div><div class="a" style="left:115px;top:1013.6px;width:1690px;height:62.6px;border-radius:19px;background:linear-gradient(90deg,#3a719f 0,#3f73a3 500px,#4674a8 690px,#4260a0 745px,#3b4393 800px,#3a3f8f 1000px,#41589c 1045px,#4a78ad 1095px,#5588ba 1300px,#6397c5 1690px);border:1px solid rgba(160,205,240,.35)"></div><div class="a" style="left:127.0px;top:1025.3px;width:38.6px;height:38.6px;border-radius:9px;background:linear-gradient(#1fc0ff,#0a6cf0);overflow:hidden;will-change:transform;"><svg style="left:0;top:0" width="38.6" height="38.6" viewBox="0 0 40 40"><path d="M21 0H40V40H19C19 34 20 30 21 26H15C15 16 17 8 21 0z" fill="#e4f2ff"/><path d="M21 0C17 8 15 16 15 26H21C20 30 19 34 19 40" fill="none" stroke="#0c3f80" stroke-width=".8"/><path d="M7 24C13 33 27 33 33 24" fill="none" stroke="#0a2a50" stroke-width="1.8" stroke-linecap="round"/><path d="M11 12V16M29 12V16" stroke="#0a2a50" stroke-width="1.8" stroke-linecap="round"/></svg></div><div class="a" style="left:144.8px;top:1070.3px;width:3px;height:3px;border-radius:50%;background:#0a0a0a"></div><div class="a" style="left:178.0px;top:1025.3px;width:38.6px;height:38.6px;border-radius:9px;background:linear-gradient(#fafafa,#e4e4e6);overflow:hidden;will-change:transform;"><svg style="left:0;top:0" width="38.6" height="38.6" viewBox="0 0 40 40"><rect x="7" y="8" width="26" height="6" rx="3" fill="#b9b9bd"/><g><rect x="8" y="18" width="6" height="6" rx="1.6" fill="#ff9d2e"/><rect x="17" y="18" width="6" height="6" rx="1.6" fill="#ff4fa0"/><rect x="26" y="18" width="6" height="6" rx="1.6" fill="#1fd0a0"/><rect x="8" y="27" width="6" height="6" rx="1.6" fill="#d48bf5"/><rect x="17" y="27" width="6" height="6" rx="1.6" fill="#58bdf8"/><rect x="26" y="27" width="6" height="6" rx="1.6" fill="#b5b5b5"/></g></svg></div><div class="a" style="left:228.9px;top:1025.3px;width:38.6px;height:38.6px;border-radius:9px;background:linear-gradient(#fbfbfb,#e6e6e8);overflow:hidden;will-change:transform;"><svg style="left:0;top:0" width="38.6" height="38.6" viewBox="0 0 40 40"><circle cx="20" cy="20" r="15" fill="#2f8df0"/><circle cx="20" cy="20" r="13" fill="none" stroke="#9cd0ff" stroke-width="1" stroke-dasharray=".8 1.2"/><path d="M30 10L22 22L18 18z" fill="#ff3b30"/><path d="M10 30L22 22L18 18z" fill="#fff"/></svg></div><div class="a" style="left:246.74px;top:1070.3px;width:3px;height:3px;border-radius:50%;background:#0a0a0a"></div><div class="a" style="left:279.9px;top:1025.3px;width:38.6px;height:38.6px;border-radius:9px;background:linear-gradient(#4fb4ff,#1a6cf0);overflow:hidden;will-change:transform;"><svg style="left:0;top:0" width="38.6" height="38.6" viewBox="0 0 40 40"><rect x="5" y="10" width="30" height="20" rx="3" fill="#f4f8ff"/><path d="M5.6 11.4L20 23L34.4 11.4" fill="none" stroke="#b4c8e8" stroke-width="1.6"/><path d="M6 29L16 19M34 29L24 19" stroke="#cfdcf0" stroke-width="1.2"/></svg></div><div class="a" style="left:330.9px;top:1025.3px;width:38.6px;height:38.6px;border-radius:9px;background:linear-gradient(#fdfdfd,#ececee);overflow:hidden;will-change:transform;"><svg style="left:0;top:0" width="38.6" height="38.6" viewBox="0 0 40 40"><path d="M20 6L34 18H31V33H9V18H6z" fill="#ff9f0a"/><rect x="27" y="8" width="3" height="7" fill="#ff9f0a"/><path d="M20 13L28 20V30H12V20z" fill="#ffbf4a"/><path d="M20 19L25 23V30H15V23z" fill="#ffd88a"/></svg></div><div class="a" style="left:381.8px;top:1025.3px;width:38.6px;height:38.6px;border-radius:9px;background:linear-gradient(#5ff777,#0cbc2a);overflow:hidden;will-change:transform;"><svg style="left:0;top:0" width="38.6" height="38.6" viewBox="0 0 40 40"><ellipse cx="20" cy="19" rx="13.6" ry="11.4" fill="#f4fff4"/><path d="M10 26C10 30 8 32 6 33C10 33.6 14 32 16 29z" fill="#f4fff4"/></svg></div><div class="a" style="left:406.55px;top:1021px;width:18.4px;height:18.4px;border-radius:50%;background:#f03a32"></div><span class="t" style="left:415.75px;top:1025px;font-size:9.5px;color:#fff;transform:translateX(-50%);">37</span><div class="a" style="left:399.65px;top:1070.3px;width:3px;height:3px;border-radius:50%;background:#0a0a0a"></div><div class="a" style="left:432.8px;top:1025.3px;width:38.6px;height:38.6px;border-radius:9px;background:linear-gradient(#5ff777,#0cbc2a);overflow:hidden;will-change:transform;"><svg style="left:0;top:0" width="38.6" height="38.6" viewBox="0 0 40 40"><path d="M20 5.6A14.4 14.4 0 1 1 12.6 32.4L6 34L7.8 27.6A14.4 14.4 0 0 1 20 5.6z" fill="none" stroke="#fff" stroke-width="2.4"/><path d="M14.6 12.6C13 14 13 17 16 21S23.6 27.4 26 26.4C27.6 25.6 28 24 27.6 23.4L24.4 21.8L22.8 23.6C20.6 22.8 18 20.2 17.2 18L18.8 16.4L17.2 13z" fill="#fff"/></svg></div><div class="a" style="left:457.52px;top:1021px;width:18.4px;height:18.4px;border-radius:50%;background:#f03a32"></div><span class="t" style="left:466.72px;top:1025px;font-size:9.5px;color:#fff;transform:translateX(-50%);">3</span><div class="a" style="left:450.62px;top:1070.3px;width:3px;height:3px;border-radius:50%;background:#0a0a0a"></div><div class="a" style="left:483.8px;top:1025.3px;width:38.6px;height:38.6px;border-radius:9px;background:#e9f6e4;overflow:hidden;will-change:transform;"><svg style="left:0;top:0" width="38.6" height="38.6" viewBox="0 0 40 40"><rect width="40" height="40" fill="#6fdc7a"/><path d="M0 0H16V40H0z" fill="#f2f2ee"/><path d="M-2 26L14 40H-2z" fill="#ff9fc2"/><path d="M20 40L40 26V40z" fill="#ffd54a"/><circle cx="34" cy="4" r="12" fill="none" stroke="#bff0c0" stroke-width="2"/><circle cx="34" cy="4" r="7" fill="none" stroke="#bff0c0" stroke-width="2"/><path d="M14 0V14M14 30V40" stroke="#2f8df0" stroke-width="6"/><path d="M-2 8L40 42" stroke="#fff" stroke-width="4" opacity=".9"/><circle cx="14" cy="22" r="10" fill="#2f8df0" stroke="#fff" stroke-width="1.6"/><path d="M14 15L19 28L14 25L9 28z" fill="#fff"/></svg></div><div class="a" style="left:534.8px;top:1025.3px;width:38.6px;height:38.6px;border-radius:9px;background:linear-gradient(#fdfdfd,#ececee);overflow:hidden;will-change:transform;"><svg style="left:0;top:0" width="38.6" height="38.6" viewBox="0 0 40 40"><ellipse cx="20" cy="11.4" rx="4.8" ry="8" fill="#ff9f0a" opacity=".85" transform="rotate(0 20 20)"/><ellipse cx="20" cy="11.4" rx="4.8" ry="8" fill="#ffd60a" opacity=".85" transform="rotate(45 20 20)"/><ellipse cx="20" cy="11.4" rx="4.8" ry="8" fill="#8fd84a" opacity=".85" transform="rotate(90 20 20)"/><ellipse cx="20" cy="11.4" rx="4.8" ry="8" fill="#34c7a0" opacity=".85" transform="rotate(135 20 20)"/><ellipse cx="20" cy="11.4" rx="4.8" ry="8" fill="#3fa8f5" opacity=".85" transform="rotate(180 20 20)"/><ellipse cx="20" cy="11.4" rx="4.8" ry="8" fill="#8a6cf0" opacity=".85" transform="rotate(225 20 20)"/><ellipse cx="20" cy="11.4" rx="4.8" ry="8" fill="#e060c8" opacity=".85" transform="rotate(270 20 20)"/><ellipse cx="20" cy="11.4" rx="4.8" ry="8" fill="#ff4a5a" opacity=".85" transform="rotate(315 20 20)"/></svg></div><div class="a" style="left:585.7px;top:1025.3px;width:38.6px;height:38.6px;border-radius:9px;background:linear-gradient(#5ff777,#0cbc2a);overflow:hidden;will-change:transform;"><svg style="left:0;top:0" width="38.6" height="38.6" viewBox="0 0 40 40"><rect x="6" y="12" width="20" height="16" rx="4" fill="#eafff0"/><path d="M27 18L34 13V27L27 22z" fill="#eafff0"/></svg></div><div class="a" style="left:610.43px;top:1021px;width:18.4px;height:18.4px;border-radius:50%;background:#f03a32"></div><span class="t" style="left:619.63px;top:1025px;font-size:9.5px;color:#fff;transform:translateX(-50%);">10</span><div class="a" style="left:636.7px;top:1025.3px;width:38.6px;height:38.6px;border-radius:9px;background:linear-gradient(#ffffff,#f2f2f4);overflow:hidden;will-change:transform;"><svg style="left:0;top:0" width="38.6" height="38.6" viewBox="0 0 40 40"><text x="20" y="12.6" font-family="Liberation Sans" font-weight="bold" font-size="7.4" fill="#ff3b30" text-anchor="middle">Tue</text><text x="20" y="32.6" font-family="Liberation Sans" font-size="23" fill="#1c1c1e" text-anchor="middle" letter-spacing="-1">17</text></svg></div><div class="a" style="left:687.7px;top:1025.3px;width:38.6px;height:38.6px;border-radius:9px;background:#c9c4b4;overflow:hidden;will-change:transform;"><svg style="left:0;top:0" width="38.6" height="38.6" viewBox="0 0 40 40"><rect x="33.6" y="4" width="6.4" height="11" fill="#30b0f0"/><rect x="33.6" y="15" width="6.4" height="11" fill="#ff9f0a"/><rect x="33.6" y="26" width="6.4" height="11" fill="#34c759"/><circle cx="18" cy="20" r="12.6" fill="#a49f92"/><circle cx="18" cy="15.6" r="5" fill="#f4f2ea"/><path d="M8.6 28C10 22 26 22 27.4 28A12.6 12.6 0 0 1 8.6 28z" fill="#f4f2ea"/></svg></div><div class="a" style="left:738.6px;top:1025.3px;width:38.6px;height:38.6px;border-radius:9px;background:linear-gradient(#ffffff,#f2f2f4);overflow:hidden;will-change:transform;"><svg style="left:0;top:0" width="38.6" height="38.6" viewBox="0 0 40 40"><circle cx="8.6" cy="10.6" r="2.2" fill="#2f7df6"/><circle cx="8.6" cy="20" r="2.2" fill="#ff453a"/><circle cx="8.6" cy="29.4" r="2.2" fill="#ff9f0a"/><path d="M14.6 10.6H34M14.6 20H34M14.6 29.4H34" stroke="#c8c8cc" stroke-width="1"/></svg></div><div class="a" style="left:789.6px;top:1025.3px;width:38.6px;height:38.6px;border-radius:9px;background:linear-gradient(#ffffff,#f2f2f0);overflow:hidden;will-change:transform;"><svg style="left:0;top:0" width="38.6" height="38.6" viewBox="0 0 40 40"><rect width="40" height="10.4" fill="#ffd52e"/><path d="M0 10.4H40" stroke="#e0b820" stroke-width=".8" stroke-dasharray="1 1"/><path d="M6 18.6H34M6 26H34M6 33.4H34" stroke="#cfcfcf" stroke-width="1"/></svg></div><div class="a" style="left:840.6px;top:1025.3px;width:38.6px;height:38.6px;border-radius:9px;background:linear-gradient(#ffffff,#f0f0f2);overflow:hidden;will-change:transform;"><svg style="left:0;top:0" width="38.6" height="38.6" viewBox="0 0 40 40"><circle cx="15" cy="25" r="10" fill="#f0643c"/><rect x="14" y="7" width="21" height="20" rx="4" fill="#2ec4e8"/><path d="M8 26C12 14 18 16 16 24S24 16 26 20S31 22 35 17" fill="none" stroke="#1c2c3c" stroke-width="1.8" stroke-linecap="round"/></svg></div><div class="a" style="left:891.5px;top:1025.3px;width:38.6px;height:38.6px;border-radius:9px;background:linear-gradient(#2a2a2c,#0c0c0e);overflow:hidden;will-change:transform;"><svg style="left:0;top:0" width="38.6" height="38.6" viewBox="0 0 40 40"><g transform="translate(3.4 16) scale(.86)"><path fill="#ececf2" d="M13.1 12.6c-.02-2.2 1.8-3.27 1.88-3.32-1.03-1.5-2.62-1.7-3.18-1.73-1.35-.14-2.64.8-3.33.8-.69 0-1.75-.78-2.88-.76-1.48.02-2.85.86-3.61 2.19-1.54 2.67-.39 6.62 1.1 8.79.74 1.06 1.61 2.25 2.76 2.21 1.11-.04 1.53-.71 2.87-.71 1.33 0 1.71.71 2.88.69 1.19-.02 1.94-1.08 2.67-2.15.84-1.23 1.19-2.42 1.21-2.48-.03-.01-2.32-.89-2.37-3.53zM10.9 6.1c.61-.74 1.02-1.77.91-2.8-.88.04-1.94.59-2.57 1.32-.56.65-1.06 1.7-.93 2.71.98.08 1.98-.5 2.59-1.23z" transform="translate(0 -8)"/></g><text x="27.8" y="26.6" font-family="Liberation Sans" font-weight="bold" font-size="15.5" fill="#f2f2f2" text-anchor="middle" letter-spacing="-.6">tv</text></svg></div><div class="a" style="left:942.5px;top:1025.3px;width:38.6px;height:38.6px;border-radius:9px;background:linear-gradient(#ff5a6e,#f5203e);overflow:hidden;will-change:transform;"><svg style="left:0;top:0" width="38.6" height="38.6" viewBox="0 0 40 40"><path d="M15 27.6V11.6L29 8.6V24.6" fill="none" stroke="#fff" stroke-width="2.2"/><path d="M15 15.6L29 12.6V9L15 12z" fill="#fff"/><ellipse cx="12" cy="28" rx="3.8" ry="3" fill="#fff"/><ellipse cx="26" cy="25" rx="3.8" ry="3" fill="#fff"/></svg></div><div class="a" style="left:993.5px;top:1025.3px;width:38.6px;height:38.6px;border-radius:9px;background:linear-gradient(#3cb0ff,#0a6cf0);overflow:hidden;will-change:transform;"><svg style="left:0;top:0" width="38.6" height="38.6" viewBox="0 0 40 40"><path d="M9 8H31L33 19H7z" fill="#f2f6fa"/><rect x="6.4" y="19" width="27.2" height="2.4" rx="1" fill="#dfe6ee"/><rect x="19" y="21" width="2" height="11" fill="#eef2f6"/><rect x="14" y="32" width="12" height="1.8" rx=".9" fill="#eef2f6"/><circle cx="20" cy="13" r="3.6" fill="#ffcc30"/><path d="M20 13V9.4A3.6 3.6 0 0 1 23.4 14z" fill="#ff5a4a"/><path d="M20 13L23.4 14A3.6 3.6 0 0 1 18 16z" fill="#40c060"/></svg></div><div class="a" style="left:1044.5px;top:1025.3px;width:38.6px;height:38.6px;border-radius:9px;background:linear-gradient(#4ff06a,#0cb82a);overflow:hidden;will-change:transform;"><svg style="left:0;top:0" width="38.6" height="38.6" viewBox="0 0 40 40"><g fill="#f4fff4"><rect x="8" y="25" width="4.6" height="9" rx="1"/><rect x="14.6" y="19" width="4.6" height="15" rx="1"/><rect x="21.2" y="8" width="4.6" height="26" rx="1"/><rect x="27.8" y="15" width="4.6" height="19" rx="1"/></g></svg></div><div class="a" style="left:1095.4px;top:1025.3px;width:38.6px;height:38.6px;border-radius:9px;background:linear-gradient(#ffb43a,#ff8a0a);overflow:hidden;will-change:transform;"><svg style="left:0;top:0" width="38.6" height="38.6" viewBox="0 0 40 40"><path d="M9 32L29 9L32 11.6L12 33z" fill="#fff"/><path d="M9 32L8 35L12 33z" fill="#e8e8e8"/><path d="M8 35.4H34" stroke="#ffe2b0" stroke-width="1"/></svg></div><div class="a" style="left:1146.4px;top:1025.3px;width:38.6px;height:38.6px;border-radius:9px;background:conic-gradient(from 20deg at 55% 55%,#ff70d0,#b070ff,#50b8ff,#50e8d0,#b0f060,#fff080,#ffb0d0,#ff70d0);overflow:hidden;will-change:transform;"><svg style="left:0;top:0" width="38.6" height="38.6" viewBox="0 0 40 40"><circle cx="21" cy="22" r="12" fill="#fff" opacity=".55"/><circle cx="21" cy="22" r="8" fill="#e8f4ff" opacity=".8"/><path d="M3 3C10 4 18 10 27 21L24 25C14 16 8 10 3 3z" fill="#3a3a42"/><path d="M27 21C31 23 33 27 31 31C28 31 25 28 24 25z" fill="#8a8a90"/></svg></div><div class="a" style="left:1164.2px;top:1070.3px;width:3px;height:3px;border-radius:50%;background:#0a0a0a"></div><div class="a" style="left:1197.4px;top:1025.3px;width:38.6px;height:38.6px;border-radius:9px;background:#e8e8e4;overflow:hidden;will-change:transform;"><svg style="left:0;top:0" width="38.6" height="38.6" viewBox="0 0 40 40"><rect x="3" y="3" width="34" height="34" rx="3" fill="#4b9a36"/><rect x="3" y="3" width="34" height="5.6" fill="#6ab054"/><circle cx="13" cy="20" r="6.6" fill="none" stroke="#fff" stroke-width="3"/><path d="M20 13.6H35M28 13.6V29H35" fill="none" stroke="#fff" stroke-width="3"/><path d="M26 37C30 34 34 32 37 27V37z" fill="#8fd060"/></svg></div><div class="a" style="left:1248.3px;top:1025.3px;width:38.6px;height:38.6px;border-radius:9px;background:linear-gradient(#dcecfa,#b8d4f0);overflow:hidden;will-change:transform;"><svg style="left:0;top:0" width="38.6" height="38.6" viewBox="0 0 40 40"><path d="M8 30V16L11 13L14 15L17 12H23L26 15L29 13L32 16V30C28 33 12 33 8 30z" fill="#478cbf"/><circle cx="14.6" cy="21" r="3.4" fill="#fff"/><circle cx="25.4" cy="21" r="3.4" fill="#fff"/><circle cx="14.8" cy="21.4" r="1.8" fill="#333"/><circle cx="25.2" cy="21.4" r="1.8" fill="#333"/><path d="M9 26H13V29H17V26H23V29H27V26H31" fill="none" stroke="#fff" stroke-width="1.6"/></svg></div><div class="a" style="left:1299.3px;top:1025.3px;width:38.6px;height:38.6px;border-radius:9px;background:linear-gradient(#3a3a3c,#222224);overflow:hidden;will-change:transform;"><svg style="left:0;top:0" width="38.6" height="38.6" viewBox="0 0 40 40"><path d="M6 25L20 13H12L14 10.6H24L32 17C36 21 34 29 26 30C20 30.6 16 27 16 23L11 27z" fill="#ea7601"/><circle cx="24.6" cy="22" r="6" fill="#fff"/><circle cx="24.6" cy="22" r="3.4" fill="#265787"/></svg></div><div class="a" style="left:1317.11px;top:1070.3px;width:3px;height:3px;border-radius:50%;background:#0a0a0a"></div><div class="a" style="left:1350.3px;top:1025.3px;width:38.6px;height:38.6px;border-radius:9px;background:linear-gradient(#9a5ad8,#6a2aa8);overflow:hidden;will-change:transform;"><svg style="left:0;top:0" width="38.6" height="38.6" viewBox="0 0 40 40"><circle cx="20" cy="20" r="14.6" fill="#fff"/><path d="M20 9.6C14 9.6 10 14 10 19.6C10 24 12.6 27.6 16.4 29V26C14 26.6 13 25 12.6 24C13.6 24.4 14 25.6 16.4 25C16.6 24.2 17 23.8 17.4 23.6C14 23 12.4 21.4 12.4 18.4C12.4 17 12.8 16 13.6 15.2C13.4 14.4 13.2 13.4 13.8 12C15 12 16 12.8 16.8 13.4C18.8 12.8 21.2 12.8 23.2 13.4C24 12.8 25 12 26.2 12C26.8 13.4 26.6 14.4 26.4 15.2C27.2 16 27.6 17 27.6 18.4C27.6 21.4 26 23 22.6 23.6C23.2 24 23.6 25 23.6 26V29C27.4 27.6 30 24 30 19.6C30 14 26 9.6 20 9.6z" fill="#7a3ab8"/></svg></div><div class="a" style="left:1401.2px;top:1025.3px;width:38.6px;height:38.6px;border-radius:9px;background:linear-gradient(#2ab4ff,#0a6cf0);overflow:hidden;will-change:transform;"><svg style="left:0;top:0" width="38.6" height="38.6" viewBox="0 0 40 40"><path d="M20 9L11 27M20 9L29 27M16.6 12L24 26" stroke="#eaf6ff" stroke-width="3" stroke-linecap="round"/><path d="M7 24H33" stroke="#eaf6ff" stroke-width="3" stroke-linecap="round"/><path d="M9 30L10.6 27M31 30L29.4 27" stroke="#eaf6ff" stroke-width="3" stroke-linecap="round"/></svg></div><div class="a" style="left:1452.2px;top:1025.3px;width:38.6px;height:38.6px;border-radius:9px;background:linear-gradient(#9a9a9e,#6a6a6e);overflow:hidden;will-change:transform;"><svg style="left:0;top:0" width="38.6" height="38.6" viewBox="0 0 40 40"><circle cx="20" cy="20" r="15.400" fill="#4a4a4e"/><rect x="18.6" y="3.6" width="2.8" height="5" fill="#e6e6e8" transform="rotate(0 20 20)"/><rect x="18.6" y="3.6" width="2.8" height="5" fill="#e6e6e8" transform="rotate(18 20 20)"/><rect x="18.6" y="3.6" width="2.8" height="5" fill="#e6e6e8" transform="rotate(36 20 20)"/><rect x="18.6" y="3.6" width="2.8" height="5" fill="#e6e6e8" transform="rotate(54 20 20)"/><rect x="18.6" y="3.6" width="2.8" height="5" fill="#e6e6e8" transform="rotate(72 20 20)"/><rect x="18.6" y="3.6" width="2.8" height="5" fill="#e6e6e8" transform="rotate(90 20 20)"/><rect x="18.6" y="3.6" width="2.8" height="5" fill="#e6e6e8" transform="rotate(108 20 20)"/><rect x="18.6" y="3.6" width="2.8" height="5" fill="#e6e6e8" transform="rotate(126 20 20)"/><rect x="18.6" y="3.6" width="2.8" height="5" fill="#e6e6e8" transform="rotate(144 20 20)"/><rect x="18.6" y="3.6" width="2.8" height="5" fill="#e6e6e8" transform="rotate(162 20 20)"/><rect x="18.6" y="3.6" width="2.8" height="5" fill="#e6e6e8" transform="rotate(180 20 20)"/><rect x="18.6" y="3.6" width="2.8" height="5" fill="#e6e6e8" transform="rotate(198 20 20)"/><rect x="18.6" y="3.6" width="2.8" height="5" fill="#e6e6e8" transform="rotate(216 20 20)"/><rect x="18.6" y="3.6" width="2.8" height="5" fill="#e6e6e8" transform="rotate(234 20 20)"/><rect x="18.6" y="3.6" width="2.8" height="5" fill="#e6e6e8" transform="rotate(252 20 20)"/><rect x="18.6" y="3.6" width="2.8" height="5" fill="#e6e6e8" transform="rotate(270 20 20)"/><rect x="18.6" y="3.6" width="2.8" height="5" fill="#e6e6e8" transform="rotate(288 20 20)"/><rect x="18.6" y="3.6" width="2.8" height="5" fill="#e6e6e8" transform="rotate(306 20 20)"/><rect x="18.6" y="3.6" width="2.8" height="5" fill="#e6e6e8" transform="rotate(324 20 20)"/><rect x="18.6" y="3.6" width="2.8" height="5" fill="#e6e6e8" transform="rotate(342 20 20)"/><circle cx="20" cy="20" r="11.6" fill="none" stroke="#e6e6e8" stroke-width="2.4"/><circle cx="20" cy="20" r="3" fill="#d8d8dc"/><path d="M20 20L20 9M20 20L29.6 25.4M20 20L10.4 25.4" stroke="#c8c8cc" stroke-width="2"/><circle cx="20" cy="20" r="15.8" fill="none" stroke="#3a3a3e" stroke-width="1"/></svg></div><div class="a" style="left:1510px;top:1022px;width:1px;height:45px;background:rgba(20,40,70,.55);"></div><div class="a" style="left:1685.4px;top:1022px;width:1px;height:45px;background:rgba(20,40,70,.55);"></div><div class="a" style="left:1527.5px;top:1025.3px;width:38.6px;height:38.6px;border-radius:9px;background:linear-gradient(#ffffff,#f4f4f2);overflow:hidden;will-change:transform;"><svg style="left:0;top:0" width="38.6" height="38.6" viewBox="0 0 40 40"><path d="M0 8H40M0 13.4H40M0 18.8H40M0 24.2H40M0 29.6H40M0 35H40" stroke="#dcdcdc" stroke-width=".7"/><path d="M9.6 0V40" stroke="#ff8a8a" stroke-width=".9"/></svg></div><div class="a" style="left:1545.3px;top:1070.3px;width:3px;height:3px;border-radius:50%;background:#0a0a0a"></div><div class="a" style="left:1578.3px;top:1025.3px;width:38.6px;height:38.6px;border-radius:9px;background:linear-gradient(#2a2a2a,#0e0e0e);overflow:hidden;will-change:transform;"><svg style="left:0;top:0" width="38.6" height="38.6" viewBox="0 0 40 40"><path d="M11 33V19A9 9 0 1 1 20 28H16.6" fill="none" stroke="#fff" stroke-width="5"/><path d="M11 33V19A9 9 0 1 1 20 28H16.6" fill="none" stroke="#111" stroke-width="2.2"/><circle cx="20" cy="19" r="4.6" fill="#111" stroke="#fff" stroke-width="1.4"/><path d="M24 27L30 33M30 27L24 33" stroke="#fff" stroke-width="3"/></svg></div><div class="a" style="left:1596.1px;top:1070.3px;width:3px;height:3px;border-radius:50%;background:#0a0a0a"></div><div class="a" style="left:1629.3px;top:1025.3px;width:38.6px;height:38.6px;border-radius:9px;background:#050505;overflow:hidden;will-change:transform;"><svg style="left:0;top:0" width="38.6" height="38.6" viewBox="0 0 40 40"><circle cx="20" cy="20" r="14.4" fill="#1ed760"/><path d="M11.6 15.4C17 13.6 24 14 29 17M12.6 20.4C17 19 23 19.4 27.6 22M13.6 25C17 24 22 24.4 25.6 26.4" fill="none" stroke="#050505" stroke-width="2.6" stroke-linecap="round"/></svg></div><div class="a" style="left:1647.1px;top:1070.3px;width:3px;height:3px;border-radius:50%;background:#0a0a0a"></div><div class="a" style="left:1706.9px;top:1027px;width:32px;height:30px;border-radius:3px;background:linear-gradient(#6fb4ee,#3a8fdc)"></div><svg style="left:1708.4px;top:1024.6px" width="29" height="41" viewBox="0 0 29 41"><path d="M0 2Q0 0 2 0H19L29 10V39Q29 41 27 41H2Q0 41 0 39z" fill="#f2f2f2"/><path d="M19 0V8Q19 10 21 10H29z" fill="#d0d0d0"/><rect x="5" y="18" width="19" height="16" rx="1" fill="#e0e0e0"/><path d="M14.500 21V29M11 26L14.500 30L18 26" fill="none" stroke="#9a9a9a" stroke-width="2"/></svg><svg style="left:1756px;top:1024px" width="36" height="42" viewBox="0 0 36 42"><path d="M4 6H32L29.4 15H6.6z" fill="#b0b4b8"/><circle cx="11" cy="5" r="3.6" fill="#c8c8c8"/><circle cx="18" cy="5" r="4" fill="#f0b030"/><circle cx="24" cy="4.6" r="3.6" fill="#e86aa0"/><circle cx="28" cy="6" r="3" fill="#50b8f0"/><circle cx="14" cy="7" r="3" fill="#e8e8e8"/><path d="M2 8Q18 12 34 8L30.6 38Q30.4 41 27 41H9Q5.6 41 5.4 38z" fill="#e6e8ea" opacity=".93"/><path d="M2 8Q18 12 34 8" fill="none" stroke="#c0c4c8" stroke-width="1.2"/><path d="M9 14L11 38M18 14V38M27 14L25 38" stroke="#d0d4d8" stroke-width="1.4"/></svg></body></html>
